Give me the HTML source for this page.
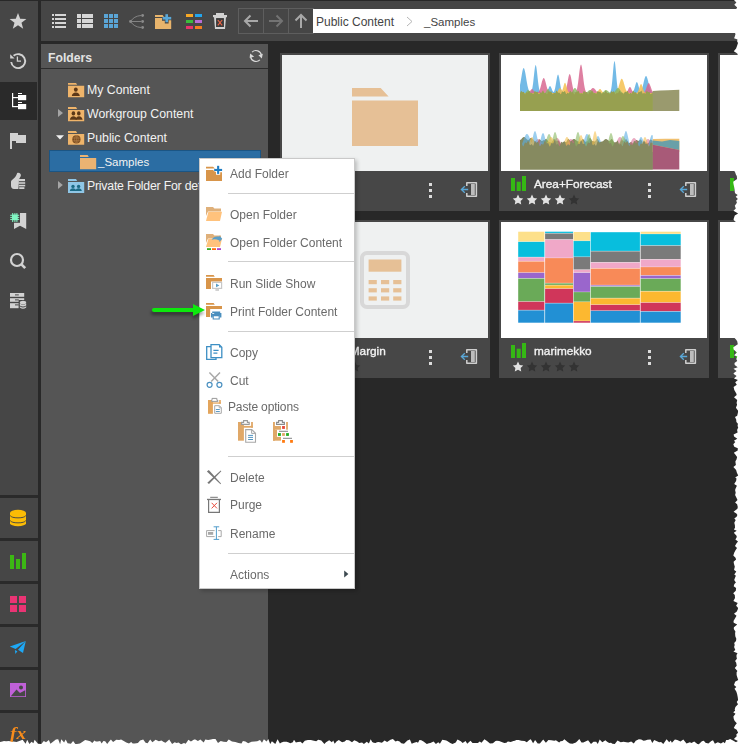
<!DOCTYPE html>
<html><head><meta charset="utf-8">
<style>
*{margin:0;padding:0;box-sizing:border-box}
html,body{width:740px;height:745px;overflow:hidden;background:#fff;font-family:"Liberation Sans",sans-serif}
.a{position:absolute}
svg{position:absolute;overflow:visible}
#app{position:absolute;left:0;top:0;width:740px;height:745px;background:#282828;overflow:hidden}
.sbsep{position:absolute;left:0;width:38px;height:3px;background:#2a2a2a}
.tree{position:absolute;font-size:12.3px;color:#f2f2f2;white-space:nowrap;line-height:14px}
.mi{position:absolute;left:230px;font-size:12px;color:#6a6a6a;will-change:transform;white-space:nowrap;line-height:14px}
.msep{position:absolute;left:228px;width:126px;height:1px;background:#cfcfcf}
.card{position:absolute;width:210px;height:158px;background:#474747}
.card .img{position:absolute;left:2px;top:2px;width:206px;height:116px;background:#fff}
.card .ttl{will-change:transform;position:absolute;left:35px;top:123.5px;font-size:11.8px;color:#f2f2f2;-webkit-text-stroke:0.35px #f2f2f2;white-space:nowrap;line-height:14px}
</style></head><body>
<div id="app">
  <!-- left sidebar -->
  <div class="a" style="left:0;top:1px;width:38px;height:744px;background:#464646"></div>
  <div class="a" style="left:0;top:82px;width:37px;height:38px;background:#2a2a2a"></div>
  <div class="sbsep" style="top:495px"></div>
  <div class="sbsep" style="top:538px"></div>
  <div class="sbsep" style="top:581px"></div>
  <div class="sbsep" style="top:624px"></div>
  <div class="sbsep" style="top:667px"></div>
  <div class="sbsep" style="top:710px"></div>

  <!-- toolbar -->
  <div class="a" style="left:41px;top:1px;width:699px;height:40px;background:#464646"></div>

  <!-- folders panel -->
  <div class="a" style="left:41px;top:44px;width:227px;height:701px;background:#555"></div>
  <div class="a" style="left:41px;top:68px;width:227px;height:1px;background:#2c2c2c"></div>
  <div class="a" style="left:48px;top:50px;font-size:12.2px;font-weight:bold;color:#e2e2e2;line-height:16px">Folders</div>

  <!-- tree -->
  <div class="a" style="left:49px;top:150px;width:212px;height:22px;background:#2b6da3;border:1px solid #1b5584"></div>
  <div class="tree" style="left:87px;top:83px">My Content</div>
  <div class="tree" style="left:87px;top:107px">Workgroup Content</div>
  <div class="tree" style="left:87px;top:131px">Public Content</div>
  <div class="tree" style="left:98px;top:155px;font-size:11.5px">_Samples</div>
  <div class="tree" style="left:87px;top:179px;letter-spacing:-0.22px">Private Folder For default</div>

  <!-- address bar -->
  <div class="a" style="left:238px;top:8px;width:76px;height:26px;border:1px solid #5e5e5e"></div>
  <div class="a" style="left:263px;top:8px;width:1px;height:26px;background:#5e5e5e"></div>
  <div class="a" style="left:288px;top:8px;width:1px;height:26px;background:#5e5e5e"></div>
  <div class="a" style="left:313px;top:9px;width:427px;height:24px;background:#fff"></div>
  <div class="a" style="left:316px;top:15px;font-size:12px;color:#444;line-height:14px;white-space:nowrap">Public Content</div>
  <div class="a" style="left:424px;top:15px;font-size:11.5px;color:#444;line-height:14px;white-space:nowrap">_Samples</div>

  <!-- cards -->
  <div class="card" style="left:280px;top:53px"><div class="img" style="background:#eff1f1"></div></div>
  <div class="card" style="left:499px;top:53px"><div class="img"></div><div class="ttl">Area+Forecast</div></div>
  <div class="card" style="left:718px;top:53px"><div class="img"></div></div>
  <div class="card" style="left:280px;top:220px"><div class="img" style="background:#eff1f1"></div><div class="ttl">Gross Margin</div></div>
  <div class="card" style="left:499px;top:220px"><div class="img"></div><div class="ttl">marimekko</div></div>
  <div class="card" style="left:718px;top:220px"><div class="img"></div></div>

  <svg style="left:0;top:0" width="740" height="745" viewBox="0 0 740 745">
 <!-- sidebar top icons -->
 <polygon fill="#d2d2d2" points="18.00,12.90 20.20,18.70 26.40,18.90 21.50,22.70 23.20,28.80 18.00,25.30 12.80,28.80 14.50,22.70 9.60,18.90 15.80,18.70"/>
 <!-- history -->
 <path d="M11.2,62 A7,7 0 1 0 13.6,55.8" fill="none" stroke="#d2d2d2" stroke-width="1.9"/>
 <polygon fill="#d2d2d2" points="10.2,54.2 10.2,58.6 14.6,58.6"/>
 <path d="M17.4,56.6 V61.2 H21" fill="none" stroke="#d2d2d2" stroke-width="1.3"/>
 <!-- tree (active) -->
 <g fill="#fff">
  <rect x="12" y="93" width="1.2" height="14"/>
  <rect x="13" y="97" width="5" height="1.2"/>
  <rect x="12" y="106" width="6" height="1.2"/>
  <rect x="18" y="95" width="8.2" height="5.2"/>
  <rect x="18" y="93" width="4" height="1"/>
  <rect x="18" y="104" width="8.2" height="5.2"/>
  <rect x="18" y="102" width="4" height="1"/>
 </g>
 <!-- flag -->
 <polygon fill="#d2d2d2" points="10,133 18,133 18,135 26,135 26,143 16,143 16,141 12,141 12,149 10,149"/>
 <!-- thumbs -->
 <g fill="#d2d2d2">
  <path d="M17.8,172.8 C19.8,172.6 21.4,174 20.8,176 L19,179.2 L18.4,189 L14,189 C12,189 11,187.6 11,185.6 L11,181.8 C11,180.8 11.8,180 12.6,179.4 C14.6,178 16.2,176.2 16.8,174 C17,173.2 17.3,172.8 17.8,172.8 Z"/>
  <rect x="19" y="179" width="6" height="2.2"/>
  <rect x="18.4" y="182.2" width="6.8" height="1.6"/>
  <rect x="18.8" y="184.8" width="6.4" height="1.6"/>
  <rect x="19.2" y="187.2" width="5.2" height="1.8"/>
 </g>
 <!-- bookmark + chip -->
 <path fill="#d2d2d2" d="M14,213 H26.2 V229 L20,225.8 L14,229 Z"/>
 <rect x="10.6" y="212.2" width="9.4" height="10.6" fill="#474747"/>
 <g fill="#80f5c2">
  <rect x="12" y="214.6" width="5.6" height="5.6"/>
  <rect x="12.2" y="213" width="1" height="9"/><rect x="14.4" y="213" width="1" height="9"/><rect x="16.4" y="213" width="1" height="9"/>
  <rect x="10.2" y="214.8" width="9" height="1"/><rect x="10.2" y="216.9" width="9" height="1"/><rect x="10.2" y="218.9" width="9" height="1"/>
 </g>
 <!-- search -->
 <circle cx="17" cy="260" r="6" fill="none" stroke="#d2d2d2" stroke-width="2.2"/>
 <path d="M21.2,264.2 L25.2,268.2" stroke="#d2d2d2" stroke-width="2.6"/>
 <!-- db list -->
 <g fill="#d2d2d2">
  <rect x="10" y="293" width="14.2" height="3.8"/>
  <rect x="10" y="298.2" width="14.2" height="3.6"/>
  <rect x="10" y="303.2" width="9" height="5"/>
 </g>
 <g fill="#474747">
  <rect x="15" y="294.4" width="3.8" height="1"/>
  <rect x="15" y="299.4" width="3.8" height="1"/>
  <rect x="15" y="304.4" width="3.8" height="1"/>
  <rect x="18.6" y="300" width="8.4" height="10"/>
 </g>
 <g fill="#d2d2d2">
  <ellipse cx="23" cy="302.6" rx="3.2" ry="1.9"/>
  <path d="M19.8,303.6 Q23,306 26.2,303.6 V305.4 Q23,307.6 19.8,305.4 Z"/>
  <path d="M19.8,306.2 Q23,308.6 26.2,306.2 V307.6 Q23,310 19.8,307.6 Z"/>
 </g>
 <!-- lower sidebar -->
 <path fill="#fbbc05" d="M10,512.8 A8,3 0 0 1 26,512.8 V523.2 A8,3 0 0 1 10,523.2 Z"/>
 <path d="M10.2,515.6 A8,2.9 0 0 0 25.8,515.6 M10.2,520.6 A8,2.9 0 0 0 25.8,520.6" fill="none" stroke="#3a3f4a" stroke-width="0.9"/>
 <g fill="#3cb814">
  <rect x="10" y="555" width="4" height="14"/>
  <rect x="16" y="559" width="4" height="10"/>
  <rect x="22" y="553" width="4" height="16"/>
 </g>
 <g fill="#ea3474">
  <rect x="10" y="596" width="7" height="7"/><rect x="19" y="596" width="7" height="7"/>
  <rect x="10" y="605" width="7" height="7"/><rect x="19" y="605" width="7" height="7"/>
 </g>
 <g fill="#1ea8f5">
  <polygon points="9.8,646.4 25.8,641.1 15.6,649"/>
  <polygon points="25.8,641.1 18,649.8 23,652.9"/>
  <polygon points="14.9,650.1 17.4,651.3 15.4,654"/>
 </g>
 <rect x="10" y="683" width="16" height="14" fill="#c061d8"/>
 <path d="M10.8,696.2 L16.5,689.5 L20,693 L25.2,690.2 V696.2 Z" fill="#474747"/>
 <circle cx="21" cy="687.4" r="2" fill="#474747"/>
 <text x="10" y="738.6" font-family="Liberation Serif" font-style="italic" font-weight="bold" font-size="16" textLength="16" lengthAdjust="spacingAndGlyphs" fill="#f78c1c">fx</text>

 <!-- toolbar -->
 <g fill="#d6d6d6">
  <rect x="52" y="14" width="2" height="2"/><rect x="55" y="14" width="11" height="2"/>
  <rect x="52" y="18" width="2" height="2"/><rect x="55" y="18" width="11" height="2"/>
  <rect x="52" y="22" width="2" height="2"/><rect x="55" y="22" width="11" height="2"/>
  <rect x="52" y="26" width="2" height="2"/><rect x="55" y="26" width="11" height="2"/>
  <rect x="77" y="14" width="4" height="4"/><rect x="82" y="14" width="11" height="4"/>
  <rect x="77" y="19" width="4" height="4"/><rect x="82" y="19" width="11" height="4"/>
  <rect x="77" y="24" width="4" height="4"/><rect x="82" y="24" width="11" height="4"/>
 </g>
 <g fill="#5aa5d6">
  <rect x="104" y="14" width="4" height="4"/><rect x="109" y="14" width="4" height="4"/><rect x="114" y="14" width="4" height="4"/>
  <rect x="104" y="19" width="4" height="4"/><rect x="109" y="19" width="4" height="4"/><rect x="114" y="19" width="4" height="4"/>
  <rect x="104" y="24" width="4" height="4"/><rect x="109" y="24" width="4" height="4"/><rect x="114" y="24" width="4" height="4"/>
 </g>
 <g fill="#8a8a8a" stroke="#8a8a8a">
  <circle cx="130.5" cy="21.5" r="1.4" stroke="none"/>
  <circle cx="142.6" cy="15.5" r="1.4" stroke="none"/>
  <circle cx="142.6" cy="21.5" r="1.4" stroke="none"/>
  <circle cx="142.6" cy="27.5" r="1.4" stroke="none"/>
  <path d="M130.5,21.5 Q134,16 141,15.5 M130.5,21.5 H141 M130.5,21.5 Q134,27 141,27.5" fill="none" stroke-width="0.9"/>
 </g>
 <path fill="#e8b46c" d="M155,15 H162.6 L164,17 H155 Z M155,18 H162 V20.8 H164.8 V23.4 H168.6 V20.2 H171.2 V29 H155 Z"/>
 <g fill="#5aa8d8">
  <rect x="165.4" y="14.2" width="2.6" height="8"/>
  <rect x="162.6" y="16.9" width="8.6" height="2.6"/>
 </g>
 <g>
  <rect x="186" y="14" width="7" height="3" fill="#f7a825"/><rect x="195" y="14" width="7" height="3" fill="#22a6ee"/>
  <rect x="186" y="20" width="7" height="3" fill="#3cbb3c"/><rect x="195" y="20" width="7" height="3" fill="#b86cd6"/>
  <rect x="186" y="26" width="7" height="3" fill="#e8336c"/><rect x="195" y="26" width="7" height="3" fill="#f57f22"/>
 </g>
 <g fill="#d2d2d2">
  <rect x="216" y="13" width="8" height="2.2"/>
  <rect x="213" y="15" width="14" height="2.2"/>
  <path d="M214,17 H226 L225,29 H215 Z M216.2,18.2 V27 H223.8 V18.2 Z" fill-rule="evenodd"/>
 </g>
 <rect x="216.2" y="18.2" width="7.6" height="8.8" fill="#3c3c3c"/>
 <path d="M217.8,20 L222.2,25.4 M222.2,20 L217.8,25.4" stroke="#f06545" stroke-width="1.1"/>
 <!-- nav arrows -->
 <path d="M245,21 H258 M250.5,15.5 L245,21 L250.5,26.5" fill="none" stroke="#a8a8a8" stroke-width="2"/>
 <path d="M269,21 H282 M276.5,15.5 L282,21 L276.5,26.5" fill="none" stroke="#737373" stroke-width="2"/>
 <path d="M301,15 V28 M295.5,20.5 L301,15 L306.5,20.5" fill="none" stroke="#a8a8a8" stroke-width="2"/>
 <path d="M407,17 L412,21.5 L407,26" fill="none" stroke="#b5b5b5" stroke-width="1"/>
 <!-- refresh -->
 <g fill="none" stroke="#d8d8d8" stroke-width="1.2">
  <path d="M252.1,52.1 A5.5,5.5 0 0 1 261.4,55.4"/>
  <path d="M259.9,59.9 A5.5,5.5 0 0 1 250.6,56.6"/>
 </g>
 <polygon fill="#d8d8d8" points="258.4,55.2 262.8,53.8 261.8,58.6"/>
 <polygon fill="#d8d8d8" points="250.2,53.4 254.2,56.8 249.6,57.8"/>
</svg>
<svg style="left:0;top:0" width="740" height="745" viewBox="0 0 740 745">
 <!-- My Content -->
 <path fill="#efb46a" d="M68,83 H76 L77.2,84.8 H68 Z M68,85.8 H84.2 V97.2 H68 Z"/>
 <g fill="#5c3818">
  <ellipse cx="75.8" cy="89.6" rx="1.9" ry="2.2"/>
  <path d="M71.8,96 C72,93.6 73.6,92.6 75.8,92.4 C78,92.6 79.6,93.6 79.8,96 Z"/>
 </g>
 <!-- Workgroup -->
 <polygon fill="#a5a5a5" points="58,109 63,113 58,117"/>
 <path fill="#efb46a" d="M68,107 H76 L77.2,109 H68 Z M68,110 H84.2 V121.2 H68 Z"/>
 <g fill="#5c3818">
  <ellipse cx="73.4" cy="113.4" rx="1.8" ry="2.1"/>
  <path d="M69.8,119.8 C70,117.6 71.6,116.4 73.4,116.2 C75.2,116.4 76.8,117.6 77,119.8 Z"/>
  <ellipse cx="78.8" cy="113.4" rx="1.8" ry="2.1"/>
  <path d="M75.4,119.8 C75.6,117.6 77.2,116.4 79,116.2 C80.8,116.4 82.4,117.6 82.6,119.8 Z"/>
 </g>
 <!-- Public -->
 <polygon fill="#f0f0f0" points="56,135.2 64,135.2 60,139.6"/>
 <path fill="#efb46a" d="M68,131 H76 L77.2,133 H68 Z M68,134 H84.2 V144.8 H68 Z"/>
 <circle cx="76.4" cy="139.4" r="4.1" fill="#7a4a1e"/>
 <g stroke="#c08a50" stroke-width="0.5" fill="none">
  <ellipse cx="76.4" cy="139.4" rx="1.8" ry="4"/>
  <path d="M72.4,138 H80.4 M72.4,140.8 H80.4 M76.4,135.4 V143.4"/>
 </g>
 <!-- Samples -->
 <path fill="#eab372" d="M80,155 H87.6 L88.8,157 H80 Z M80,158 H96.2 V169.2 H80 Z"/>
 <!-- Private -->
 <polygon fill="#a5a5a5" points="58,181 62.8,185 58,189"/>
 <path fill="#8fc6e6" d="M68,179 H76 L77.2,181 H68 Z M68,182 H84.2 V193 H68 Z"/>
 <g fill="#1b6a85">
  <circle cx="73" cy="186.4" r="1.7"/>
  <path d="M69.8,191 C70,189.2 71.4,188.3 73,188.2 C74.6,188.3 76,189.2 76.2,191 Z"/>
  <circle cx="78.6" cy="186.4" r="1.7"/>
  <path d="M75.4,191 C75.6,189.2 77,188.3 78.6,188.2 C80.2,188.3 81.6,189.2 81.8,191 Z"/>
 </g>
</svg>
<svg style="left:0;top:0" width="740" height="745" viewBox="0 0 740 745">
<path fill="#e6c096" d="M352,88 H380.7 L388.6,96.5 H352 Z M352,100.5 H418 V146 H352 Z"/>
<rect x="362" y="253" width="46" height="54" rx="5" ry="5" fill="none" stroke="#d8d8d8" stroke-width="4"/>
<g fill="#e6c096"><rect x="368.6" y="259.5" width="32.8" height="12.2"/>
<rect x="368.6" y="280" width="8.2" height="4.2"/>
<rect x="368.6" y="288.2" width="8.2" height="4.2"/>
<rect x="368.6" y="296.4" width="8.2" height="4.2"/>
<rect x="381" y="280" width="8.2" height="4.2"/>
<rect x="381" y="288.2" width="8.2" height="4.2"/>
<rect x="381" y="296.4" width="8.2" height="4.2"/>
<rect x="393.2" y="280" width="8.2" height="4.2"/>
<rect x="393.2" y="288.2" width="8.2" height="4.2"/>
<rect x="393.2" y="296.4" width="8.2" height="4.2"/>
</g>
<path d="M520,111 L520.0,85.1 L520.5,82.5 L521.0,79.5 L521.5,76.4 L522.0,73.4 L522.5,70.8 L523.0,69.0 L523.5,68.1 L524.0,68.2 L524.5,69.4 L525.0,71.4 L525.5,74.1 L526.0,77.1 L526.5,80.2 L527.0,83.1 L527.5,85.7 L528.0,87.8 L528.5,89.5 L529.0,90.7 L529.5,91.6 L530.0,92.1 L530.5,92.5 L531.0,92.1 L531.5,91.2 L532.0,89.6 L532.5,87.2 L533.0,83.9 L533.5,79.6 L534.0,74.9 L534.5,70.4 L535.0,66.9 L535.5,65.1 L536.0,65.5 L536.5,67.9 L537.0,71.9 L537.5,76.6 L538.0,81.2 L538.5,85.1 L539.0,88.2 L539.5,90.3 L540.0,91.6 L540.5,92.3 L541.0,92.7 L541.5,92.9 L542.0,93.0 L542.6,93.0 L543.1,93.0 L543.6,93.0 L544.1,93.0 L544.6,93.0 L545.1,92.9 L545.6,92.8 L546.1,92.6 L546.6,92.3 L547.1,91.6 L547.6,90.7 L548.1,89.6 L548.6,88.3 L549.1,87.1 L549.6,86.2 L550.1,86.0 L550.6,86.4 L551.1,87.4 L551.6,88.6 L552.1,89.9 L552.6,91.0 L553.1,91.8 L553.6,92.1 L554.1,91.4 L554.6,90.1 L555.1,88.2 L555.6,85.6 L556.1,82.6 L556.6,79.5 L557.1,76.8 L557.6,75.0 L558.1,74.5 L558.6,75.5 L559.1,77.6 L559.6,80.6 L560.1,83.7 L560.6,86.6 L561.1,88.9 L561.6,90.6 L562.1,91.7 L562.6,92.3 L563.1,92.7 L563.6,92.9 L564.1,93.0 L564.6,93.0 L565.1,93.0 L565.6,93.0 L566.1,93.0 L566.6,93.0 L567.1,93.0 L567.6,93.0 L568.1,93.0 L568.6,93.0 L569.1,93.0 L569.6,93.0 L570.1,93.0 L570.6,93.0 L571.1,93.0 L571.6,93.0 L572.1,93.0 L572.6,93.0 L573.1,93.0 L573.6,93.0 L574.1,93.0 L574.6,93.0 L575.1,93.0 L575.6,93.0 L576.1,93.0 L576.6,93.0 L577.1,93.0 L577.6,93.0 L578.1,93.0 L578.6,93.0 L579.1,93.0 L579.6,93.0 L580.1,93.0 L580.6,93.0 L581.1,93.0 L581.6,93.0 L582.1,93.0 L582.6,93.0 L583.1,93.0 L583.6,93.0 L584.1,93.0 L584.6,93.0 L585.1,93.0 L585.6,93.0 L586.1,93.0 L586.7,93.0 L587.2,93.0 L587.7,93.0 L588.2,93.0 L588.7,93.0 L589.2,93.0 L589.7,93.0 L590.2,93.0 L590.7,93.0 L591.2,93.0 L591.7,93.0 L592.2,93.0 L592.7,93.0 L593.2,93.0 L593.7,93.0 L594.2,93.0 L594.7,93.0 L595.2,93.0 L595.7,93.0 L596.2,93.0 L596.7,93.0 L597.2,93.0 L597.7,93.0 L598.2,93.0 L598.7,93.0 L599.2,93.0 L599.7,93.0 L600.2,93.0 L600.7,93.0 L601.2,93.0 L601.7,93.0 L602.2,93.0 L602.7,93.0 L603.2,93.0 L603.7,93.0 L604.2,93.0 L604.7,93.0 L605.2,93.0 L605.7,93.0 L606.2,93.0 L606.7,93.0 L607.2,93.0 L607.7,93.0 L608.2,93.0 L608.7,93.0 L609.2,92.8 L609.7,92.6 L610.2,92.0 L610.7,90.9 L611.2,88.9 L611.7,85.7 L612.2,81.2 L612.7,75.6 L613.2,69.7 L613.7,64.6 L614.2,61.5 L614.7,61.3 L615.2,64.0 L615.7,68.9 L616.2,74.7 L616.7,80.5 L617.2,85.2 L617.7,88.6 L618.2,90.7 L618.7,91.9 L619.2,92.5 L619.7,92.8 L620.2,93.0 L620.7,93.0 L621.2,93.0 L621.7,93.0 L622.2,93.0 L622.7,93.0 L623.2,93.0 L623.7,93.0 L624.2,93.0 L624.7,93.0 L625.2,93.0 L625.7,93.0 L626.2,93.0 L626.7,93.0 L627.2,93.0 L627.7,93.0 L628.2,93.0 L628.7,93.0 L629.2,93.0 L629.7,93.0 L630.2,93.0 L630.8,93.0 L631.3,92.9 L631.8,92.8 L632.3,92.6 L632.8,92.2 L633.3,91.5 L633.8,90.4 L634.3,89.0 L634.8,87.3 L635.3,85.4 L635.8,83.7 L636.3,82.5 L636.8,82.0 L637.3,82.4 L637.8,83.5 L638.3,85.2 L638.8,87.0 L639.3,88.8 L639.8,90.3 L640.3,91.3 L640.8,91.3 L641.3,90.4 L641.8,89.2 L642.3,87.7 L642.8,85.9 L643.3,83.9 L643.8,81.8 L644.3,79.8 L644.8,78.0 L645.3,76.7 L645.8,76.1 L646.3,76.1 L646.8,76.9 L647.3,78.2 L647.8,80.0 L648.3,82.1 L648.8,84.2 L649.3,86.2 L649.8,88.0 L650.3,89.4 L650.8,90.6 L651.3,91.4 L651.8,92.0 L652.3,92.4 L652.8,92.7 L652.8,111 Z" fill="#5aaee2" fill-opacity="0.85"/>
<path d="M520,111 L520.0,93.0 L520.5,93.0 L521.0,93.0 L521.5,93.0 L522.0,93.0 L522.5,93.0 L523.0,93.0 L523.5,93.0 L524.0,93.0 L524.5,93.0 L525.0,93.0 L525.5,93.0 L526.0,93.0 L526.5,93.0 L527.0,93.0 L527.5,92.9 L528.0,92.8 L528.5,92.6 L529.0,92.3 L529.5,91.8 L530.0,91.1 L530.5,90.4 L531.0,89.7 L531.5,89.2 L532.0,89.0 L532.5,89.2 L533.0,89.7 L533.5,90.4 L534.0,91.2 L534.5,91.8 L535.0,92.3 L535.5,92.6 L536.0,92.8 L536.5,92.9 L537.0,92.8 L537.5,92.6 L538.0,92.3 L538.5,91.9 L539.0,91.2 L539.5,90.2 L540.0,88.9 L540.5,87.3 L541.0,85.4 L541.5,83.4 L542.0,81.5 L542.6,79.8 L543.1,78.6 L543.6,78.0 L544.1,78.2 L544.6,79.0 L545.1,80.5 L545.6,82.3 L546.1,84.3 L546.6,86.2 L547.1,88.0 L547.6,89.5 L548.1,90.6 L548.6,91.5 L549.1,92.1 L549.6,92.5 L550.1,92.7 L550.6,92.8 L551.1,92.9 L551.6,93.0 L552.1,93.0 L552.6,93.0 L553.1,93.0 L553.6,93.0 L554.1,93.0 L554.6,93.0 L555.1,93.0 L555.6,93.0 L556.1,93.0 L556.6,93.0 L557.1,93.0 L557.6,93.0 L558.1,93.0 L558.6,93.0 L559.1,93.0 L559.6,93.0 L560.1,93.0 L560.6,93.0 L561.1,93.0 L561.6,93.0 L562.1,93.0 L562.6,93.0 L563.1,92.9 L563.6,92.8 L564.1,92.6 L564.6,92.2 L565.1,91.6 L565.6,90.5 L566.1,89.1 L566.6,87.1 L567.1,84.6 L567.6,81.9 L568.1,79.0 L568.6,76.6 L569.1,74.8 L569.6,74.0 L570.1,74.4 L570.6,75.8 L571.1,78.1 L571.6,80.9 L572.1,83.7 L572.6,86.3 L573.1,88.4 L573.6,90.1 L574.1,91.2 L574.6,92.0 L575.1,92.5 L575.6,92.2 L576.1,91.4 L576.6,90.2 L577.1,88.4 L577.6,85.8 L578.1,82.5 L578.6,78.6 L579.1,74.3 L579.6,70.2 L580.1,66.9 L580.6,64.9 L581.1,64.5 L581.6,65.8 L582.1,68.6 L582.6,72.4 L583.1,76.6 L583.6,80.8 L584.1,84.4 L584.6,87.3 L585.1,89.5 L585.6,90.9 L586.1,91.9 L586.7,92.4 L587.2,92.7 L587.7,92.6 L588.2,92.3 L588.7,92.0 L589.2,91.6 L589.7,91.1 L590.2,90.5 L590.7,89.9 L591.2,89.2 L591.7,88.7 L592.2,88.3 L592.7,88.0 L593.2,88.0 L593.7,88.2 L594.2,88.5 L594.7,89.0 L595.2,89.6 L595.7,90.3 L596.2,90.9 L596.7,91.4 L597.2,91.9 L597.7,92.2 L598.2,92.5 L598.7,92.7 L599.2,92.8 L599.7,92.9 L600.2,92.9 L600.7,93.0 L601.2,93.0 L601.7,93.0 L602.2,93.0 L602.7,93.0 L603.2,93.0 L603.7,93.0 L604.2,93.0 L604.7,93.0 L605.2,93.0 L605.7,93.0 L606.2,93.0 L606.7,93.0 L607.2,93.0 L607.7,93.0 L608.2,93.0 L608.7,93.0 L609.2,93.0 L609.7,93.0 L610.2,93.0 L610.7,93.0 L611.2,93.0 L611.7,93.0 L612.2,93.0 L612.7,93.0 L613.2,93.0 L613.7,93.0 L614.2,93.0 L614.7,93.0 L615.2,93.0 L615.7,93.0 L616.2,93.0 L616.7,93.0 L617.2,93.0 L617.7,93.0 L618.2,93.0 L618.7,93.0 L619.2,93.0 L619.7,93.0 L620.2,93.0 L620.7,93.0 L621.2,93.0 L621.7,93.0 L622.2,93.0 L622.7,93.0 L623.2,93.0 L623.7,93.0 L624.2,93.0 L624.7,93.0 L625.2,92.9 L625.7,92.8 L626.2,92.5 L626.7,92.1 L627.2,91.4 L627.7,90.5 L628.2,89.4 L628.7,88.3 L629.2,87.5 L629.7,87.0 L630.2,87.1 L630.8,87.8 L631.3,88.8 L631.8,89.9 L632.3,90.9 L632.8,91.7 L633.3,92.3 L633.8,92.6 L634.3,92.8 L634.8,92.9 L635.3,93.0 L635.8,93.0 L636.3,93.0 L636.8,93.0 L637.3,93.0 L637.8,93.0 L638.3,93.0 L638.8,93.0 L639.3,93.0 L639.8,93.0 L640.3,93.0 L640.8,93.0 L641.3,93.0 L641.8,93.0 L642.3,92.9 L642.8,92.9 L643.3,92.7 L643.8,92.5 L644.3,92.1 L644.8,91.5 L645.3,90.6 L645.8,89.4 L646.3,88.1 L646.8,86.6 L647.3,85.2 L647.8,84.0 L648.3,83.2 L648.8,83.0 L649.3,83.4 L649.8,84.4 L650.3,85.7 L650.8,87.1 L651.3,88.6 L651.8,89.9 L652.3,90.9 L652.8,91.7 L652.8,111 Z" fill="#d86890" fill-opacity="0.85"/>
<path d="M520,111 L520.0,93.0 L520.5,93.0 L521.0,93.0 L521.5,93.0 L522.0,93.0 L522.5,93.0 L523.0,93.0 L523.5,93.0 L524.0,93.0 L524.5,93.0 L525.0,93.0 L525.5,93.0 L526.0,93.0 L526.5,93.0 L527.0,93.0 L527.5,93.0 L528.0,93.0 L528.5,93.0 L529.0,93.0 L529.5,93.0 L530.0,93.0 L530.5,93.0 L531.0,93.0 L531.5,93.0 L532.0,93.0 L532.5,93.0 L533.0,93.0 L533.5,93.0 L534.0,93.0 L534.5,93.0 L535.0,93.0 L535.5,93.0 L536.0,93.0 L536.5,93.0 L537.0,93.0 L537.5,93.0 L538.0,93.0 L538.5,93.0 L539.0,93.0 L539.5,93.0 L540.0,93.0 L540.5,93.0 L541.0,93.0 L541.5,93.0 L542.0,93.0 L542.6,93.0 L543.1,93.0 L543.6,93.0 L544.1,93.0 L544.6,93.0 L545.1,93.0 L545.6,93.0 L546.1,93.0 L546.6,93.0 L547.1,93.0 L547.6,93.0 L548.1,93.0 L548.6,93.0 L549.1,93.0 L549.6,93.0 L550.1,93.0 L550.6,93.0 L551.1,93.0 L551.6,93.0 L552.1,93.0 L552.6,93.0 L553.1,93.0 L553.6,93.0 L554.1,93.0 L554.6,93.0 L555.1,93.0 L555.6,92.9 L556.1,92.7 L556.6,92.5 L557.1,92.0 L557.6,91.4 L558.1,90.5 L558.6,89.6 L559.1,88.7 L559.6,88.2 L560.1,88.0 L560.6,88.3 L561.1,89.0 L561.6,89.9 L562.1,90.8 L562.6,89.6 L563.1,87.9 L563.6,86.0 L564.1,84.3 L564.6,83.1 L565.1,82.8 L565.6,83.5 L566.1,84.9 L566.6,86.8 L567.1,88.6 L567.6,90.2 L568.1,91.4 L568.6,92.1 L569.1,92.6 L569.6,92.8 L570.1,92.9 L570.6,93.0 L571.1,93.0 L571.6,93.0 L572.1,93.0 L572.6,93.0 L573.1,93.0 L573.6,93.0 L574.1,93.0 L574.6,93.0 L575.1,93.0 L575.6,93.0 L576.1,93.0 L576.6,93.0 L577.1,93.0 L577.6,93.0 L578.1,93.0 L578.6,93.0 L579.1,93.0 L579.6,93.0 L580.1,93.0 L580.6,93.0 L581.1,93.0 L581.6,93.0 L582.1,93.0 L582.6,93.0 L583.1,93.0 L583.6,93.0 L584.1,93.0 L584.6,93.0 L585.1,93.0 L585.6,93.0 L586.1,93.0 L586.7,93.0 L587.2,93.0 L587.7,93.0 L588.2,93.0 L588.7,93.0 L589.2,93.0 L589.7,93.0 L590.2,93.0 L590.7,93.0 L591.2,93.0 L591.7,93.0 L592.2,93.0 L592.7,93.0 L593.2,93.0 L593.7,93.0 L594.2,93.0 L594.7,93.0 L595.2,93.0 L595.7,92.9 L596.2,92.8 L596.7,92.5 L597.2,92.1 L597.7,91.6 L598.2,90.9 L598.7,90.1 L599.2,89.5 L599.7,89.1 L600.2,89.0 L600.7,89.3 L601.2,89.9 L601.7,90.7 L602.2,91.4 L602.7,92.0 L603.2,92.4 L603.7,92.7 L604.2,92.9 L604.7,92.9 L605.2,93.0 L605.7,93.0 L606.2,93.0 L606.7,93.0 L607.2,93.0 L607.7,93.0 L608.2,93.0 L608.7,93.0 L609.2,93.0 L609.7,93.0 L610.2,93.0 L610.7,93.0 L611.2,93.0 L611.7,93.0 L612.2,93.0 L612.7,93.0 L613.2,93.0 L613.7,92.9 L614.2,92.9 L614.7,92.8 L615.2,92.6 L615.7,92.4 L616.2,92.0 L616.7,91.4 L617.2,90.6 L617.7,89.5 L618.2,88.2 L618.7,86.6 L619.2,84.8 L619.7,83.1 L620.2,81.4 L620.7,80.0 L621.2,79.1 L621.7,78.7 L622.2,78.9 L622.7,79.7 L623.2,81.0 L623.7,82.6 L624.2,84.3 L624.7,86.1 L625.2,87.7 L625.7,89.2 L626.2,90.3 L626.7,91.2 L627.2,91.8 L627.7,92.3 L628.2,92.6 L628.7,92.8 L629.2,92.9 L629.7,92.9 L630.2,93.0 L630.8,93.0 L631.3,93.0 L631.8,93.0 L632.3,93.0 L632.8,93.0 L633.3,93.0 L633.8,93.0 L634.3,93.0 L634.8,93.0 L635.3,93.0 L635.8,93.0 L636.3,92.9 L636.8,92.7 L637.3,92.4 L637.8,91.8 L638.3,90.8 L638.8,89.5 L639.3,87.9 L639.8,86.2 L640.3,84.9 L640.8,84.1 L641.3,84.1 L641.8,85.0 L642.3,86.4 L642.8,88.1 L643.3,89.6 L643.8,90.9 L644.3,91.8 L644.8,92.4 L645.3,92.7 L645.8,92.9 L646.3,93.0 L646.8,93.0 L647.3,93.0 L647.8,93.0 L648.3,93.0 L648.8,93.0 L649.3,93.0 L649.8,93.0 L650.3,93.0 L650.8,93.0 L651.3,93.0 L651.8,93.0 L652.3,93.0 L652.8,93.0 L652.8,111 Z" fill="#f5c050" fill-opacity="0.85"/>
<path d="M520,111 L520.0,94.0 L520.5,94.0 L521.0,94.0 L521.5,94.0 L522.0,94.0 L522.5,94.0 L523.0,94.0 L523.5,93.9 L524.0,93.8 L524.5,93.6 L525.0,93.3 L525.5,92.8 L526.0,92.1 L526.5,91.4 L527.0,90.7 L527.5,90.2 L528.0,90.0 L528.5,90.2 L529.0,90.7 L529.5,91.4 L530.0,92.2 L530.5,92.8 L531.0,93.3 L531.5,93.6 L532.0,93.8 L532.5,93.9 L533.0,94.0 L533.5,94.0 L534.0,94.0 L534.5,94.0 L535.0,94.0 L535.5,94.0 L536.0,94.0 L536.5,94.0 L537.0,94.0 L537.5,94.0 L538.0,94.0 L538.5,94.0 L539.0,94.0 L539.5,94.0 L540.0,94.0 L540.5,94.0 L541.0,94.0 L541.5,94.0 L542.0,94.0 L542.6,94.0 L543.1,94.0 L543.6,93.9 L544.1,93.7 L544.6,93.5 L545.1,93.0 L545.6,92.4 L546.1,91.6 L546.6,90.6 L547.1,89.8 L547.6,89.2 L548.1,89.0 L548.6,89.3 L549.1,90.0 L549.6,90.9 L550.1,91.8 L550.6,92.6 L551.1,93.2 L551.6,93.6 L552.1,93.8 L552.6,93.9 L553.1,94.0 L553.6,94.0 L554.1,94.0 L554.6,94.0 L555.1,94.0 L555.6,94.0 L556.1,94.0 L556.6,94.0 L557.1,94.0 L557.6,94.0 L558.1,94.0 L558.6,94.0 L559.1,94.0 L559.6,94.0 L560.1,94.0 L560.6,94.0 L561.1,94.0 L561.6,94.0 L562.1,94.0 L562.6,94.0 L563.1,94.0 L563.6,94.0 L564.1,94.0 L564.6,94.0 L565.1,94.0 L565.6,94.0 L566.1,94.0 L566.6,94.0 L567.1,94.0 L567.6,94.0 L568.1,94.0 L568.6,94.0 L569.1,93.9 L569.6,93.8 L570.1,93.7 L570.6,93.4 L571.1,93.0 L571.6,92.5 L572.1,91.8 L572.6,91.0 L573.1,90.1 L573.6,89.2 L574.1,88.5 L574.6,88.1 L575.1,88.0 L575.6,88.3 L576.1,88.9 L576.6,89.7 L577.1,90.5 L577.6,91.4 L578.1,92.2 L578.6,92.8 L579.1,93.3 L579.6,93.6 L580.1,93.8 L580.6,93.9 L581.1,93.9 L581.6,94.0 L582.1,94.0 L582.6,94.0 L583.1,93.9 L583.6,93.9 L584.1,93.8 L584.6,93.6 L585.1,93.5 L585.6,93.2 L586.1,92.9 L586.7,92.5 L587.2,92.0 L587.7,91.5 L588.2,91.0 L588.7,90.6 L589.2,90.2 L589.7,90.0 L590.2,90.0 L590.7,90.1 L591.2,90.4 L591.7,90.8 L592.2,91.3 L592.7,91.8 L593.2,92.3 L593.7,92.7 L594.2,93.1 L594.7,93.4 L595.2,93.6 L595.7,93.7 L596.2,93.8 L596.7,93.9 L597.2,93.9 L597.7,94.0 L598.2,94.0 L598.7,94.0 L599.2,93.9 L599.7,93.9 L600.2,93.8 L600.7,93.6 L601.2,93.4 L601.7,93.2 L602.2,92.8 L602.7,92.4 L603.2,92.0 L603.7,91.5 L604.2,91.0 L604.7,90.5 L605.2,90.2 L605.7,90.0 L606.2,90.0 L606.7,90.2 L607.2,90.5 L607.7,90.9 L608.2,91.3 L608.7,91.8 L609.2,92.3 L609.7,92.7 L610.2,93.1 L610.7,93.4 L611.2,93.6 L611.7,93.7 L612.2,93.6 L612.7,93.4 L613.2,93.1 L613.7,92.7 L614.2,92.2 L614.7,91.6 L615.2,90.9 L615.7,90.1 L616.2,89.4 L616.7,88.8 L617.2,88.3 L617.7,88.0 L618.2,88.0 L618.7,88.3 L619.2,88.7 L619.7,89.3 L620.2,90.1 L620.7,90.8 L621.2,91.5 L621.7,92.2 L622.2,92.7 L622.7,93.1 L623.2,93.4 L623.7,93.6 L624.2,93.8 L624.7,93.9 L625.2,93.9 L625.7,94.0 L626.2,94.0 L626.7,94.0 L627.2,94.0 L627.7,94.0 L628.2,94.0 L628.7,94.0 L629.2,94.0 L629.7,94.0 L630.2,94.0 L630.8,94.0 L631.3,94.0 L631.8,94.0 L632.3,94.0 L632.8,94.0 L633.3,94.0 L633.8,94.0 L634.3,94.0 L634.8,94.0 L635.3,94.0 L635.8,94.0 L636.3,94.0 L636.8,94.0 L637.3,94.0 L637.8,94.0 L638.3,94.0 L638.8,94.0 L639.3,94.0 L639.8,94.0 L640.3,94.0 L640.8,94.0 L641.3,94.0 L641.8,94.0 L642.3,94.0 L642.8,94.0 L643.3,94.0 L643.8,94.0 L644.3,94.0 L644.8,94.0 L645.3,94.0 L645.8,94.0 L646.3,94.0 L646.8,94.0 L647.3,94.0 L647.8,94.0 L648.3,94.0 L648.8,94.0 L649.3,94.0 L649.8,94.0 L650.3,94.0 L650.8,94.0 L651.3,94.0 L651.8,94.0 L652.3,94.0 L652.8,94.0 L652.8,111 Z" fill="#88b860" fill-opacity="0.8"/>
<path d="M520,111 L520.0,93.3 L520.5,91.9 L521.0,90.9 L521.5,90.9 L522.0,91.7 L522.5,92.3 L523.0,92.1 L523.5,91.8 L524.0,92.2 L524.5,93.4 L525.0,94.4 L525.5,94.3 L526.0,93.2 L526.5,92.3 L527.0,92.2 L527.5,92.5 L528.0,92.4 L528.5,91.5 L529.0,90.7 L529.5,90.8 L530.0,92.0 L530.5,93.2 L531.0,93.5 L531.5,93.1 L532.0,92.9 L532.5,93.4 L533.0,94.0 L533.5,93.8 L534.0,92.6 L534.5,91.3 L535.0,90.9 L535.5,91.5 L536.0,92.1 L536.5,92.0 L537.0,91.5 L537.5,91.7 L538.0,92.8 L538.5,94.0 L539.0,94.4 L539.5,93.7 L540.0,92.7 L540.5,92.4 L541.0,92.8 L541.5,92.8 L542.0,91.9 L542.6,90.8 L543.1,90.6 L543.6,91.4 L544.1,92.6 L544.6,93.2 L545.1,92.9 L545.6,92.7 L546.1,93.2 L546.6,94.0 L547.1,94.2 L547.6,93.3 L548.1,91.9 L548.6,91.2 L549.1,91.5 L549.6,92.0 L550.1,92.0 L550.6,91.4 L551.1,91.2 L551.6,92.1 L552.1,93.5 L552.6,94.3 L553.1,93.9 L553.6,93.0 L554.1,92.7 L554.6,93.0 L555.1,93.2 L555.6,92.5 L556.1,91.2 L556.6,90.5 L557.1,91.0 L557.6,92.1 L558.1,92.8 L558.6,92.7 L559.1,92.4 L559.6,92.8 L560.1,93.8 L560.6,94.4 L561.1,93.9 L561.6,92.6 L562.1,91.6 L562.6,91.6 L563.1,92.1 L563.6,92.1 L564.1,91.4 L564.6,90.9 L565.1,91.5 L565.6,92.8 L566.1,93.9 L566.6,93.9 L567.1,93.3 L567.6,92.8 L568.1,93.1 L568.6,93.5 L569.1,93.1 L569.6,91.8 L570.1,90.7 L570.6,90.7 L571.1,91.7 L571.6,92.5 L572.1,92.5 L572.6,92.1 L573.1,92.4 L573.6,93.4 L574.1,94.4 L574.6,94.3 L575.1,93.2 L575.6,92.1 L576.1,91.8 L576.6,92.2 L577.1,92.3 L577.6,91.6 L578.1,90.8 L578.6,91.0 L579.1,92.1 L579.6,93.4 L580.1,93.8 L580.6,93.3 L581.1,92.9 L581.6,93.2 L582.1,93.7 L582.6,93.6 L583.1,92.5 L583.6,91.2 L584.1,90.7 L584.6,91.4 L585.1,92.2 L585.6,92.3 L586.1,91.9 L586.7,91.9 L587.2,92.9 L587.7,94.1 L588.2,94.5 L588.7,93.7 L589.2,92.6 L589.7,92.1 L590.2,92.4 L590.7,92.5 L591.2,91.9 L591.7,90.9 L592.2,90.6 L592.7,91.5 L593.2,92.8 L593.7,93.5 L594.2,93.3 L594.7,92.9 L595.2,93.1 L595.7,93.8 L596.2,94.0 L596.7,93.1 L597.2,91.7 L597.7,90.9 L598.2,91.2 L598.7,91.9 L599.2,92.1 L599.7,91.7 L600.2,91.5 L600.7,92.3 L601.2,93.6 L601.7,94.4 L602.2,94.0 L602.7,93.0 L603.2,92.4 L603.7,92.6 L604.2,92.9 L604.7,92.3 L605.2,91.2 L605.7,90.5 L606.2,91.0 L606.7,92.2 L607.2,93.1 L607.7,93.1 L608.2,92.7 L608.7,92.9 L609.2,93.7 L609.7,94.3 L610.2,93.8 L610.7,92.4 L611.2,91.3 L611.7,91.3 L612.2,91.9 L612.7,92.1 L613.2,91.6 L613.7,91.2 L614.2,91.7 L614.7,93.0 L615.2,94.1 L615.7,94.2 L616.2,93.4 L616.7,92.7 L617.2,92.8 L617.7,93.2 L618.2,92.9 L618.7,91.7 L619.2,90.7 L619.7,90.7 L620.2,91.7 L620.7,92.7 L621.2,92.8 L621.7,92.5 L622.2,92.6 L622.7,93.4 L623.2,94.3 L623.7,94.2 L624.2,93.1 L624.7,91.9 L625.2,91.5 L625.7,91.9 L626.2,92.2 L626.7,91.7 L627.2,91.0 L627.7,91.1 L628.2,92.3 L628.7,93.6 L629.2,94.1 L629.7,93.5 L630.2,92.9 L630.8,93.0 L631.3,93.4 L631.8,93.4 L632.3,92.3 L632.8,91.0 L633.3,90.6 L633.8,91.3 L634.3,92.2 L634.8,92.6 L635.3,92.3 L635.8,92.2 L636.3,93.0 L636.8,94.1 L637.3,94.5 L637.8,93.7 L638.3,92.4 L638.8,91.8 L639.3,92.0 L639.8,92.3 L640.3,91.9 L640.8,91.0 L641.3,90.8 L641.8,91.6 L642.3,93.0 L642.8,93.8 L643.3,93.6 L643.8,93.0 L644.3,93.0 L644.8,93.6 L645.3,93.8 L645.8,93.0 L646.3,91.6 L646.8,90.8 L647.3,91.0 L647.8,91.9 L648.3,92.3 L648.8,92.0 L649.3,91.8 L649.8,92.4 L650.3,93.7 L650.8,94.5 L651.3,94.1 L651.8,93.0 L652.3,92.2 L652.8,92.3 L652.8,111 Z" fill="#97a050" fill-opacity="1"/>
<path d="M652.8,91 L660,90.6 L668,90.2 L679.3,89.8 V111 H652.8 Z" fill="#9a9a6e"/>
<path d="M520,169.4 L520.0,140.1 L520.5,139.8 L521.0,139.4 L521.5,138.9 L522.0,138.3 L522.5,137.8 L523.0,137.4 L523.5,137.1 L524.0,137.0 L524.5,137.1 L525.0,137.4 L525.5,137.8 L526.0,138.4 L526.5,138.9 L527.0,139.4 L527.5,139.8 L528.0,140.1 L528.5,140.0 L529.0,139.4 L529.5,138.9 L530.0,138.4 L530.5,138.1 L531.0,138.0 L531.5,138.1 L532.0,138.4 L532.5,138.9 L533.0,139.5 L533.5,140.0 L534.0,140.5 L534.5,141.0 L535.0,141.3 L535.5,141.5 L536.0,141.7 L536.5,141.8 L537.0,141.9 L537.5,141.9 L538.0,141.3 L538.5,140.3 L539.0,139.6 L539.5,139.3 L540.0,139.4 L540.5,139.9 L541.0,140.5 L541.5,140.9 L542.0,141.0 L542.6,140.8 L543.1,140.4 L543.6,140.1 L544.1,140.2 L544.6,140.2 L545.1,139.6 L545.6,139.1 L546.1,139.0 L546.6,139.2 L547.1,139.7 L547.6,140.4 L548.1,141.1 L548.6,141.7 L549.1,141.9 L549.6,142.0 L550.1,142.3 L550.6,142.6 L551.1,142.7 L551.6,142.4 L552.1,141.8 L552.6,140.9 L553.1,139.9 L553.6,139.3 L554.1,139.1 L554.6,139.4 L555.1,139.9 L555.6,140.6 L556.1,141.1 L556.6,141.2 L557.1,141.0 L557.6,140.7 L558.1,140.5 L558.6,140.6 L559.1,141.1 L559.6,141.9 L560.1,142.8 L560.6,143.6 L561.1,144.0 L561.6,143.9 L562.1,143.4 L562.6,142.7 L563.1,142.0 L563.6,141.7 L564.1,141.7 L564.6,142.0 L565.1,142.0 L565.6,142.0 L566.1,142.0 L566.6,141.4 L567.1,140.5 L567.6,139.6 L568.1,139.1 L568.6,139.0 L569.1,139.4 L569.6,140.0 L570.1,140.8 L570.6,141.2 L571.1,140.8 L571.6,140.4 L572.1,140.0 L572.6,139.6 L573.1,139.3 L573.6,139.0 L574.1,139.0 L574.6,139.1 L575.1,139.4 L575.6,139.8 L576.1,140.2 L576.6,140.6 L577.1,141.0 L577.6,141.3 L578.1,141.4 L578.6,141.4 L579.1,141.6 L579.6,141.9 L580.1,141.9 L580.6,141.6 L581.1,141.0 L581.6,140.2 L582.1,139.4 L582.6,138.9 L583.1,139.0 L583.6,139.5 L584.1,140.3 L584.6,141.0 L585.1,141.6 L585.6,141.8 L586.1,141.7 L586.7,141.4 L587.2,141.2 L587.7,141.3 L588.2,140.6 L588.7,139.5 L589.2,138.7 L589.7,138.1 L590.2,138.0 L590.7,138.4 L591.2,139.2 L591.7,140.2 L592.2,141.2 L592.7,141.0 L593.2,141.0 L593.7,141.3 L594.2,141.5 L594.7,141.6 L595.2,141.3 L595.7,140.7 L596.2,139.9 L596.7,139.3 L597.2,138.9 L597.7,139.1 L598.2,139.7 L598.7,140.5 L599.2,141.4 L599.7,142.0 L600.2,142.1 L600.7,142.0 L601.2,141.8 L601.7,141.6 L602.2,141.5 L602.7,141.2 L603.2,140.9 L603.7,140.4 L604.2,140.0 L604.7,139.5 L605.2,139.2 L605.7,139.0 L606.2,139.0 L606.7,139.2 L607.2,139.5 L607.7,139.9 L608.2,140.3 L608.7,140.8 L609.2,141.2 L609.7,141.0 L610.2,140.5 L610.7,139.8 L611.2,139.2 L611.7,139.0 L612.2,139.3 L612.7,140.0 L613.2,140.9 L613.7,141.8 L614.2,142.2 L614.7,142.2 L615.2,142.4 L615.7,142.1 L616.2,141.9 L616.7,141.9 L617.2,142.3 L617.7,142.9 L618.2,143.5 L618.7,143.9 L619.2,143.8 L619.7,143.2 L620.2,142.4 L620.7,141.4 L621.2,140.6 L621.7,140.3 L622.2,140.3 L622.7,140.6 L623.2,140.9 L623.7,141.1 L624.2,140.9 L624.7,140.4 L625.2,139.8 L625.7,139.3 L626.2,139.2 L626.7,139.6 L627.2,140.4 L627.7,141.3 L628.2,142.2 L628.7,142.8 L629.2,143.0 L629.7,142.7 L630.2,142.4 L630.8,142.1 L631.3,142.1 L631.8,142.4 L632.3,142.9 L632.8,143.4 L633.3,143.7 L633.8,143.5 L634.3,142.9 L634.8,141.9 L635.3,141.0 L635.8,140.2 L636.3,139.9 L636.8,140.0 L637.3,140.3 L637.8,140.7 L638.3,140.9 L638.8,140.8 L639.3,140.4 L639.8,139.9 L640.3,139.5 L640.8,139.5 L641.3,140.0 L641.8,140.8 L642.3,141.8 L642.8,142.7 L643.3,143.2 L643.8,143.3 L644.3,143.0 L644.8,142.5 L645.3,142.2 L645.8,142.1 L646.3,142.4 L646.8,142.8 L647.3,143.2 L647.8,143.4 L648.3,143.1 L648.8,142.5 L649.3,141.5 L649.8,140.5 L650.3,139.8 L650.8,139.6 L651.3,139.7 L651.8,140.2 L652.3,140.6 L652.8,140.9 L652.8,169.4 Z" fill="#868a60" fill-opacity="1"/>
<path d="M520,150 L520.0,150.0 L520.5,150.0 L521.0,150.0 L521.5,150.0 L522.0,150.0 L522.5,150.0 L523.0,150.0 L523.5,150.0 L524.0,150.0 L524.5,150.0 L525.0,150.0 L525.5,150.0 L526.0,150.0 L526.5,149.9 L527.0,149.9 L527.5,149.8 L528.0,149.8 L528.5,149.7 L529.0,149.5 L529.5,149.3 L530.0,149.0 L530.5,148.7 L531.0,148.3 L531.5,147.8 L532.0,147.2 L532.5,146.5 L533.0,145.7 L533.5,144.9 L534.0,144.0 L534.5,143.1 L535.0,142.2 L535.5,141.3 L536.0,140.5 L536.5,139.9 L537.0,139.4 L537.5,139.1 L538.0,139.0 L538.5,139.1 L539.0,139.5 L539.5,140.0 L540.0,140.6 L540.5,141.4 L541.0,142.3 L541.5,143.2 L542.0,144.1 L542.6,145.0 L543.1,145.9 L543.6,146.6 L544.1,147.3 L544.6,147.9 L545.1,148.4 L545.6,148.8 L546.1,149.1 L546.6,149.3 L547.1,149.5 L547.6,149.4 L548.1,149.2 L548.6,148.9 L549.1,148.6 L549.6,148.1 L550.1,147.6 L550.6,147.0 L551.1,146.3 L551.6,145.6 L552.1,144.7 L552.6,143.8 L553.1,142.9 L553.6,141.9 L554.1,141.0 L554.6,140.2 L555.1,139.4 L555.6,138.8 L556.1,138.3 L556.6,138.1 L557.1,138.0 L557.6,138.1 L558.1,138.5 L558.6,139.0 L559.1,139.6 L559.6,140.4 L560.1,141.3 L560.6,142.2 L561.1,143.2 L561.6,144.1 L562.1,145.0 L562.6,145.8 L563.1,146.6 L563.6,147.2 L564.1,147.8 L564.6,147.7 L565.1,147.1 L565.6,146.4 L566.1,145.6 L566.6,144.8 L567.1,143.9 L567.6,142.9 L568.1,142.0 L568.6,141.2 L569.1,140.4 L569.6,139.8 L570.1,139.3 L570.6,139.1 L571.1,139.0 L571.6,139.2 L572.1,139.5 L572.6,140.1 L573.1,140.7 L573.6,141.6 L574.1,142.4 L574.6,143.4 L575.1,144.3 L575.6,145.2 L576.1,146.0 L576.6,146.7 L577.1,147.4 L577.6,148.0 L578.1,148.4 L578.6,148.8 L579.1,149.1 L579.6,149.4 L580.1,149.6 L580.6,149.7 L581.1,149.8 L581.6,149.9 L582.1,149.9 L582.6,149.9 L583.1,150.0 L583.6,150.0 L584.1,150.0 L584.6,150.0 L585.1,150.0 L585.6,150.0 L586.1,150.0 L586.7,150.0 L587.2,150.0 L587.7,150.0 L588.2,150.0 L588.7,150.0 L589.2,150.0 L589.7,150.0 L590.2,150.0 L590.7,150.0 L591.2,150.0 L591.7,150.0 L592.2,150.0 L592.7,150.0 L593.2,150.0 L593.7,150.0 L594.2,150.0 L594.7,150.0 L595.2,150.0 L595.7,150.0 L596.2,150.0 L596.7,150.0 L597.2,150.0 L597.7,150.0 L598.2,150.0 L598.7,150.0 L599.2,150.0 L599.7,150.0 L600.2,150.0 L600.7,150.0 L601.2,150.0 L601.7,150.0 L602.2,150.0 L602.7,150.0 L603.2,150.0 L603.7,150.0 L604.2,150.0 L604.7,150.0 L605.2,150.0 L605.7,150.0 L606.2,150.0 L606.7,150.0 L607.2,150.0 L607.7,150.0 L608.2,149.9 L608.7,149.9 L609.2,149.9 L609.7,149.8 L610.2,149.7 L610.7,149.5 L611.2,149.3 L611.7,149.1 L612.2,148.7 L612.7,148.3 L613.2,147.8 L613.7,147.2 L614.2,146.4 L614.7,145.6 L615.2,144.6 L615.7,143.6 L616.2,142.5 L616.7,141.4 L617.2,140.3 L617.7,139.4 L618.2,138.5 L618.7,137.8 L619.2,137.3 L619.7,137.0 L620.2,137.0 L620.7,137.3 L621.2,137.7 L621.7,138.4 L622.2,139.3 L622.7,140.2 L623.2,141.3 L623.7,142.4 L624.2,143.5 L624.7,144.5 L625.2,145.5 L625.7,146.3 L626.2,147.1 L626.7,147.7 L627.2,147.9 L627.7,147.3 L628.2,146.6 L628.7,145.8 L629.2,145.0 L629.7,144.0 L630.2,143.0 L630.8,142.0 L631.3,141.0 L631.8,140.1 L632.3,139.3 L632.8,138.7 L633.3,138.3 L633.8,138.0 L634.3,138.0 L634.8,138.3 L635.3,138.7 L635.8,139.3 L636.3,140.1 L636.8,141.1 L637.3,142.0 L637.8,143.0 L638.3,144.0 L638.8,145.0 L639.3,145.9 L639.8,146.7 L640.3,147.4 L640.8,147.9 L641.3,148.1 L641.8,147.5 L642.3,146.9 L642.8,146.1 L643.3,145.3 L643.8,144.5 L644.3,143.5 L644.8,142.6 L645.3,141.7 L645.8,140.9 L646.3,140.2 L646.8,139.6 L647.3,139.2 L647.8,139.0 L648.3,139.0 L648.8,139.3 L649.3,139.7 L649.8,140.3 L650.3,141.0 L650.8,141.9 L651.3,142.8 L651.8,143.7 L652.3,144.6 L652.8,145.5 L652.8,150 Z" fill="#d86890" fill-opacity="0.55"/>
<path d="M520,150 L520.0,147.6 L520.5,146.8 L521.0,146.0 L521.5,145.0 L522.0,143.9 L522.5,142.6 L523.0,141.3 L523.5,140.0 L524.0,138.7 L524.5,137.4 L525.0,136.3 L525.5,135.3 L526.0,134.6 L526.5,134.1 L527.0,134.0 L527.5,134.2 L528.0,134.6 L528.5,135.4 L529.0,136.3 L529.5,137.5 L530.0,138.7 L530.5,140.1 L531.0,141.4 L531.5,142.7 L532.0,141.2 L532.5,138.8 L533.0,136.4 L533.5,134.2 L534.0,132.5 L534.5,131.4 L535.0,131.0 L535.5,131.5 L536.0,132.7 L536.5,134.5 L537.0,136.7 L537.5,139.1 L538.0,141.5 L538.5,143.6 L539.0,145.4 L539.5,143.9 L540.0,142.0 L540.5,139.9 L541.0,137.8 L541.5,135.8 L542.0,134.3 L542.6,133.3 L543.1,133.0 L543.6,133.4 L544.1,134.6 L544.6,136.2 L545.1,138.2 L545.6,140.3 L546.1,142.4 L546.6,144.3 L547.1,145.9 L547.6,147.2 L548.1,148.1 L548.6,148.8 L549.1,149.3 L549.6,149.6 L550.1,149.8 L550.6,149.9 L551.1,149.9 L551.6,150.0 L552.1,150.0 L552.6,150.0 L553.1,150.0 L553.6,150.0 L554.1,150.0 L554.6,150.0 L555.1,150.0 L555.6,150.0 L556.1,150.0 L556.6,150.0 L557.1,150.0 L557.6,150.0 L558.1,150.0 L558.6,150.0 L559.1,150.0 L559.6,150.0 L560.1,150.0 L560.6,150.0 L561.1,150.0 L561.6,150.0 L562.1,150.0 L562.6,150.0 L563.1,150.0 L563.6,150.0 L564.1,150.0 L564.6,150.0 L565.1,150.0 L565.6,150.0 L566.1,150.0 L566.6,150.0 L567.1,150.0 L567.6,150.0 L568.1,150.0 L568.6,150.0 L569.1,150.0 L569.6,150.0 L570.1,150.0 L570.6,150.0 L571.1,150.0 L571.6,150.0 L572.1,150.0 L572.6,150.0 L573.1,150.0 L573.6,150.0 L574.1,150.0 L574.6,150.0 L575.1,150.0 L575.6,150.0 L576.1,150.0 L576.6,150.0 L577.1,149.9 L577.6,149.9 L578.1,149.8 L578.6,149.7 L579.1,149.5 L579.6,149.2 L580.1,148.8 L580.6,148.3 L581.1,147.6 L581.6,146.7 L582.1,145.7 L582.6,144.4 L583.1,143.0 L583.6,141.4 L584.1,139.8 L584.6,138.2 L585.1,136.8 L585.6,135.5 L586.1,134.6 L586.7,134.1 L587.2,134.0 L587.7,134.4 L588.2,135.1 L588.7,136.3 L589.2,137.6 L589.7,139.2 L590.2,140.8 L590.7,142.4 L591.2,143.9 L591.7,145.2 L592.2,146.3 L592.7,147.3 L593.2,147.4 L593.7,146.3 L594.2,145.1 L594.7,143.7 L595.2,142.1 L595.7,140.5 L596.2,139.0 L596.7,137.7 L597.2,136.7 L597.7,136.1 L598.2,136.0 L598.7,136.5 L599.2,137.3 L599.7,138.6 L600.2,140.0 L600.7,141.6 L601.2,143.2 L601.7,144.7 L602.2,146.0 L602.7,147.1 L603.2,148.0 L603.7,148.6 L604.2,149.1 L604.7,149.4 L605.2,149.7 L605.7,149.8 L606.2,149.9 L606.7,149.9 L607.2,150.0 L607.7,150.0 L608.2,150.0 L608.7,150.0 L609.2,150.0 L609.7,150.0 L610.2,150.0 L610.7,150.0 L611.2,150.0 L611.7,150.0 L612.2,150.0 L612.7,150.0 L613.2,150.0 L613.7,150.0 L614.2,150.0 L614.7,150.0 L615.2,150.0 L615.7,150.0 L616.2,150.0 L616.7,150.0 L617.2,150.0 L617.7,149.9 L618.2,149.9 L618.7,149.8 L619.2,149.6 L619.7,149.4 L620.2,148.9 L620.7,148.3 L621.2,147.3 L621.7,146.1 L622.2,144.4 L622.7,142.5 L623.2,140.2 L623.7,137.8 L624.2,135.5 L624.7,133.5 L625.2,131.9 L625.7,131.1 L626.2,131.1 L626.7,131.9 L627.2,133.4 L627.7,135.4 L628.2,137.7 L628.7,140.1 L629.2,142.4 L629.7,144.4 L630.2,146.0 L630.8,147.3 L631.3,148.3 L631.8,148.9 L632.3,149.4 L632.8,149.6 L633.3,149.8 L633.8,149.7 L634.3,149.5 L634.8,149.2 L635.3,148.8 L635.8,148.2 L636.3,147.4 L636.8,146.4 L637.3,145.2 L637.8,143.8 L638.3,142.4 L638.8,140.9 L639.3,139.5 L639.8,138.3 L640.3,137.5 L640.8,137.0 L641.3,137.1 L641.8,137.5 L642.3,138.4 L642.8,139.6 L643.3,141.0 L643.8,142.5 L644.3,144.0 L644.8,145.3 L645.3,146.5 L645.8,147.5 L646.3,148.2 L646.8,148.6 L647.3,147.8 L647.8,146.8 L648.3,145.4 L648.8,143.8 L649.3,142.0 L649.8,140.2 L650.3,138.3 L650.8,136.8 L651.3,135.6 L651.8,135.1 L652.3,135.1 L652.8,135.8 L652.8,150 Z" fill="#5aaee2" fill-opacity="0.6"/>
<path d="M520,150 L520.0,150.0 L520.5,150.0 L521.0,150.0 L521.5,150.0 L522.0,150.0 L522.5,150.0 L523.0,150.0 L523.5,150.0 L524.0,150.0 L524.5,150.0 L525.0,150.0 L525.5,150.0 L526.0,150.0 L526.5,150.0 L527.0,150.0 L527.5,150.0 L528.0,150.0 L528.5,150.0 L529.0,150.0 L529.5,150.0 L530.0,150.0 L530.5,150.0 L531.0,150.0 L531.5,150.0 L532.0,150.0 L532.5,150.0 L533.0,150.0 L533.5,150.0 L534.0,150.0 L534.5,150.0 L535.0,150.0 L535.5,150.0 L536.0,150.0 L536.5,150.0 L537.0,150.0 L537.5,150.0 L538.0,150.0 L538.5,150.0 L539.0,150.0 L539.5,149.9 L540.0,149.9 L540.5,149.8 L541.0,149.6 L541.5,149.4 L542.0,149.1 L542.6,148.7 L543.1,148.1 L543.6,147.3 L544.1,146.3 L544.6,145.1 L545.1,143.7 L545.6,142.1 L546.1,140.5 L546.6,138.8 L547.1,137.2 L547.6,135.9 L548.1,134.8 L548.6,134.2 L549.1,134.0 L549.6,134.3 L550.1,135.1 L550.6,136.2 L551.1,137.6 L551.6,139.2 L552.1,140.9 L552.6,139.2 L553.1,136.9 L553.6,134.9 L554.1,133.3 L554.6,132.3 L555.1,132.0 L555.6,132.5 L556.1,133.7 L556.6,135.5 L557.1,137.6 L557.6,139.9 L558.1,142.1 L558.6,144.1 L559.1,145.8 L559.6,147.1 L560.1,148.1 L560.6,148.8 L561.1,149.3 L561.6,149.6 L562.1,149.8 L562.6,149.9 L563.1,149.9 L563.6,150.0 L564.1,150.0 L564.6,150.0 L565.1,150.0 L565.6,150.0 L566.1,150.0 L566.6,150.0 L567.1,150.0 L567.6,150.0 L568.1,150.0 L568.6,150.0 L569.1,150.0 L569.6,150.0 L570.1,149.9 L570.6,149.8 L571.1,149.7 L571.6,149.5 L572.1,149.1 L572.6,148.5 L573.1,147.7 L573.6,146.6 L574.1,145.1 L574.6,143.3 L575.1,141.2 L575.6,138.9 L576.1,136.7 L576.6,134.7 L577.1,133.1 L577.6,132.2 L578.1,132.0 L578.6,132.6 L579.1,133.9 L579.6,135.7 L580.1,137.9 L580.6,140.1 L581.1,142.3 L581.6,144.3 L582.1,145.9 L582.6,147.2 L583.1,148.2 L583.6,148.7 L584.1,147.9 L584.6,146.9 L585.1,145.6 L585.6,143.9 L586.1,142.1 L586.7,140.1 L587.2,138.1 L587.7,136.3 L588.2,135.0 L588.7,134.2 L589.2,134.0 L589.7,134.6 L590.2,135.8 L590.7,137.4 L591.2,139.3 L591.7,141.3 L592.2,143.3 L592.7,145.0 L593.2,146.4 L593.7,147.6 L594.2,148.4 L594.7,149.0 L595.2,149.4 L595.7,149.7 L596.2,149.8 L596.7,149.9 L597.2,150.0 L597.7,150.0 L598.2,150.0 L598.7,150.0 L599.2,150.0 L599.7,150.0 L600.2,150.0 L600.7,150.0 L601.2,150.0 L601.7,150.0 L602.2,150.0 L602.7,150.0 L603.2,149.9 L603.7,149.8 L604.2,149.7 L604.7,149.5 L605.2,149.1 L605.7,148.5 L606.2,147.7 L606.7,146.6 L607.2,145.1 L607.7,143.4 L608.2,141.4 L608.7,139.2 L609.2,137.1 L609.7,135.3 L610.2,133.9 L610.7,133.1 L611.2,133.1 L611.7,133.7 L612.2,135.0 L612.7,136.8 L613.2,138.9 L613.7,141.0 L614.2,143.0 L614.7,144.8 L615.2,146.3 L615.7,147.5 L616.2,148.4 L616.7,148.7 L617.2,148.1 L617.7,147.4 L618.2,146.4 L618.7,145.3 L619.2,144.1 L619.7,142.6 L620.2,141.2 L620.7,139.7 L621.2,138.4 L621.7,137.3 L622.2,136.5 L622.7,136.1 L623.2,136.0 L623.7,136.4 L624.2,137.2 L624.7,138.3 L625.2,139.6 L625.7,141.1 L626.2,142.5 L626.7,144.0 L627.2,145.3 L627.7,146.4 L628.2,147.3 L628.7,148.1 L629.2,148.7 L629.7,149.1 L630.2,149.4 L630.8,149.6 L631.3,149.8 L631.8,149.9 L632.3,149.9 L632.8,150.0 L633.3,150.0 L633.8,150.0 L634.3,150.0 L634.8,150.0 L635.3,150.0 L635.8,150.0 L636.3,150.0 L636.8,150.0 L637.3,150.0 L637.8,150.0 L638.3,150.0 L638.8,150.0 L639.3,150.0 L639.8,150.0 L640.3,150.0 L640.8,150.0 L641.3,150.0 L641.8,150.0 L642.3,150.0 L642.8,150.0 L643.3,150.0 L643.8,150.0 L644.3,150.0 L644.8,150.0 L645.3,150.0 L645.8,150.0 L646.3,150.0 L646.8,150.0 L647.3,150.0 L647.8,150.0 L648.3,150.0 L648.8,150.0 L649.3,150.0 L649.8,150.0 L650.3,150.0 L650.8,150.0 L651.3,150.0 L651.8,150.0 L652.3,150.0 L652.8,150.0 L652.8,150 Z" fill="#88b860" fill-opacity="0.6"/>
<path d="M520,150 L520.0,150.0 L520.5,150.0 L521.0,150.0 L521.5,150.0 L522.0,150.0 L522.5,150.0 L523.0,150.0 L523.5,150.0 L524.0,149.9 L524.5,149.9 L525.0,149.8 L525.5,149.7 L526.0,149.4 L526.5,149.0 L527.0,148.5 L527.5,147.7 L528.0,146.7 L528.5,145.4 L529.0,144.0 L529.5,142.4 L530.0,140.7 L530.5,139.2 L531.0,138.0 L531.5,137.3 L532.0,137.0 L532.5,137.3 L533.0,138.1 L533.5,139.4 L534.0,140.9 L534.5,142.5 L535.0,144.1 L535.5,145.6 L536.0,146.8 L536.5,147.8 L537.0,148.6 L537.5,149.1 L538.0,149.4 L538.5,149.7 L539.0,149.8 L539.5,149.9 L540.0,149.9 L540.5,149.8 L541.0,149.7 L541.5,149.6 L542.0,149.4 L542.6,149.2 L543.1,148.9 L543.6,148.5 L544.1,148.0 L544.6,147.4 L545.1,146.7 L545.6,145.8 L546.1,144.9 L546.6,143.9 L547.1,142.8 L547.6,141.7 L548.1,140.7 L548.6,139.7 L549.1,138.7 L549.6,138.0 L550.1,137.4 L550.6,137.1 L551.1,137.0 L551.6,137.2 L552.1,137.6 L552.6,138.2 L553.1,139.0 L553.6,139.9 L554.1,141.0 L554.6,142.1 L555.1,143.1 L555.6,144.2 L556.1,145.2 L556.6,146.1 L557.1,146.9 L557.6,147.5 L558.1,148.1 L558.6,148.6 L559.1,148.9 L559.6,149.2 L560.1,149.3 L560.6,148.9 L561.1,148.4 L561.6,147.8 L562.1,146.9 L562.6,145.9 L563.1,144.8 L563.6,143.5 L564.1,142.2 L564.6,140.8 L565.1,139.5 L565.6,138.4 L566.1,137.6 L566.6,137.1 L567.1,137.0 L567.6,137.3 L568.1,137.9 L568.6,138.9 L569.1,140.1 L569.6,141.4 L570.1,142.7 L570.6,144.1 L571.1,145.3 L571.6,146.4 L572.1,147.3 L572.6,148.0 L573.1,148.6 L573.6,149.1 L574.1,149.4 L574.6,149.6 L575.1,149.2 L575.6,148.8 L576.1,148.1 L576.6,147.1 L577.1,145.9 L577.6,144.4 L578.1,142.6 L578.6,140.8 L579.1,138.9 L579.6,137.2 L580.1,135.9 L580.6,135.2 L581.1,135.0 L581.6,135.5 L582.1,136.6 L582.6,138.1 L583.1,139.9 L583.6,141.8 L584.1,143.6 L584.6,145.3 L585.1,146.6 L585.6,147.7 L586.1,148.5 L586.7,149.1 L587.2,149.4 L587.7,149.7 L588.2,149.8 L588.7,149.7 L589.2,149.5 L589.7,149.1 L590.2,148.4 L590.7,147.5 L591.2,146.1 L591.7,144.2 L592.2,142.0 L592.7,139.4 L593.2,136.7 L593.7,134.3 L594.2,132.4 L594.7,131.2 L595.2,131.1 L595.7,131.9 L596.2,133.6 L596.7,135.9 L597.2,138.5 L597.7,141.2 L598.2,143.5 L598.7,145.5 L599.2,147.1 L599.7,148.2 L600.2,148.9 L600.7,149.4 L601.2,149.7 L601.7,149.8 L602.2,149.9 L602.7,150.0 L603.2,150.0 L603.7,150.0 L604.2,150.0 L604.7,150.0 L605.2,150.0 L605.7,150.0 L606.2,150.0 L606.7,150.0 L607.2,150.0 L607.7,150.0 L608.2,150.0 L608.7,150.0 L609.2,150.0 L609.7,150.0 L610.2,150.0 L610.7,150.0 L611.2,150.0 L611.7,150.0 L612.2,150.0 L612.7,150.0 L613.2,150.0 L613.7,150.0 L614.2,150.0 L614.7,150.0 L615.2,150.0 L615.7,150.0 L616.2,150.0 L616.7,150.0 L617.2,150.0 L617.7,150.0 L618.2,150.0 L618.7,150.0 L619.2,150.0 L619.7,150.0 L620.2,150.0 L620.7,150.0 L621.2,150.0 L621.7,150.0 L622.2,150.0 L622.7,150.0 L623.2,150.0 L623.7,150.0 L624.2,150.0 L624.7,150.0 L625.2,150.0 L625.7,150.0 L626.2,150.0 L626.7,150.0 L627.2,150.0 L627.7,150.0 L628.2,150.0 L628.7,150.0 L629.2,150.0 L629.7,150.0 L630.2,150.0 L630.8,150.0 L631.3,150.0 L631.8,150.0 L632.3,150.0 L632.8,150.0 L633.3,150.0 L633.8,150.0 L634.3,150.0 L634.8,150.0 L635.3,150.0 L635.8,150.0 L636.3,150.0 L636.8,150.0 L637.3,149.9 L637.8,149.9 L638.3,149.7 L638.8,149.5 L639.3,149.2 L639.8,148.8 L640.3,148.1 L640.8,147.2 L641.3,146.1 L641.8,144.7 L642.3,143.2 L642.8,141.5 L643.3,139.9 L643.8,138.6 L644.3,137.6 L644.8,137.1 L645.3,137.1 L645.8,137.7 L646.3,138.7 L646.8,140.1 L647.3,141.7 L647.8,143.4 L648.3,144.9 L648.8,146.2 L649.3,147.4 L649.8,148.2 L650.3,148.8 L650.8,149.3 L651.3,149.6 L651.8,149.8 L652.3,149.9 L652.8,149.9 L652.8,150 Z" fill="#f5c050" fill-opacity="0.6"/>
<path d="M520,169.4 L520.0,144.0 L520.5,144.1 L521.0,143.6 L521.5,143.4 L522.0,144.0 L522.5,145.3 L523.0,146.3 L523.5,146.2 L524.0,145.1 L524.5,143.5 L525.0,142.4 L525.5,142.4 L526.0,142.9 L526.5,143.2 L527.0,142.6 L527.5,141.6 L528.0,140.8 L528.5,141.2 L529.0,142.6 L529.5,144.3 L530.0,145.2 L530.5,145.1 L531.0,144.5 L531.5,144.1 L532.0,144.5 L532.5,145.3 L533.0,145.8 L533.5,145.2 L534.0,143.6 L534.5,142.0 L535.0,141.2 L535.5,141.5 L536.0,142.4 L536.5,142.9 L537.0,142.6 L537.5,142.0 L538.0,141.7 L538.5,142.5 L539.0,144.1 L539.5,145.6 L540.0,146.2 L540.5,145.6 L541.0,144.5 L541.5,143.9 L542.0,144.0 L542.6,144.6 L543.1,144.7 L543.6,143.8 L544.1,142.2 L544.6,140.9 L545.1,140.6 L545.6,141.5 L546.1,142.8 L546.6,143.5 L547.1,143.4 L547.6,143.0 L548.1,143.0 L548.6,143.9 L549.1,145.3 L549.6,146.4 L550.1,146.3 L550.6,145.1 L551.1,143.7 L551.6,142.9 L552.1,143.0 L552.6,143.5 L553.1,143.5 L553.6,142.6 L554.1,141.3 L554.6,140.6 L555.1,141.0 L555.6,142.4 L556.1,144.0 L556.6,144.7 L557.1,144.5 L557.6,144.0 L558.1,143.9 L558.6,144.7 L559.1,145.7 L559.6,146.2 L560.1,145.5 L560.6,143.9 L561.1,142.3 L561.6,141.7 L562.1,142.1 L562.6,142.7 L563.1,142.9 L563.6,142.3 L564.1,141.4 L564.6,141.3 L565.1,142.2 L565.6,143.9 L566.1,145.4 L566.6,145.8 L567.1,145.2 L567.6,144.4 L568.1,144.1 L568.6,144.6 L569.1,145.2 L569.6,145.2 L570.1,144.0 L570.6,142.3 L571.1,141.1 L571.6,140.9 L572.1,141.7 L572.6,142.8 L573.1,143.2 L573.6,142.8 L574.1,142.3 L574.6,142.5 L575.1,143.7 L575.6,145.3 L576.1,146.3 L576.6,146.2 L577.1,145.1 L577.6,143.9 L578.1,143.4 L578.6,143.7 L579.1,144.1 L579.6,143.9 L580.1,142.7 L580.6,141.2 L581.1,140.5 L581.6,141.0 L582.1,142.3 L582.6,143.7 L583.1,144.1 L583.6,143.8 L584.1,143.4 L584.6,143.7 L585.1,144.8 L585.6,146.0 L586.1,146.4 L586.7,145.6 L587.2,144.0 L587.7,142.7 L588.2,142.3 L588.7,142.7 L589.2,143.1 L589.7,142.9 L590.2,142.0 L590.7,141.0 L591.2,140.9 L591.7,142.0 L592.2,143.7 L592.7,145.0 L593.2,145.3 L593.7,144.7 L594.2,144.1 L594.7,144.2 L595.2,145.0 L595.7,145.7 L596.2,145.6 L596.7,144.3 L597.2,142.6 L597.7,141.4 L598.2,141.3 L598.7,142.1 L599.2,142.8 L599.7,142.8 L600.2,142.2 L600.7,141.7 L601.2,142.1 L601.7,143.5 L602.2,145.1 L602.7,146.1 L603.2,145.9 L603.7,144.9 L604.2,144.0 L604.7,143.9 L605.2,144.4 L605.7,144.7 L606.2,144.2 L606.7,142.8 L607.2,141.3 L607.7,140.6 L608.2,141.1 L608.7,142.3 L609.2,143.4 L609.7,143.6 L610.2,143.1 L610.7,142.9 L611.2,143.4 L611.7,144.8 L612.2,146.1 L612.7,146.5 L613.2,145.6 L613.7,144.2 L614.2,143.1 L614.7,142.9 L615.2,143.3 L615.7,143.6 L616.2,143.0 L616.7,141.8 L617.2,140.8 L617.7,140.7 L618.2,141.8 L618.7,143.4 L619.2,144.6 L619.7,144.7 L620.2,144.2 L620.7,143.8 L621.2,144.3 L621.7,145.3 L622.2,146.1 L622.7,145.9 L623.2,144.5 L623.7,142.8 L624.2,141.8 L624.7,141.8 L625.2,142.5 L625.7,142.9 L626.2,142.6 L626.7,141.7 L627.2,141.2 L627.7,141.7 L628.2,143.2 L628.7,144.9 L629.2,145.8 L629.7,145.5 L630.2,144.7 L630.8,144.1 L631.3,144.3 L631.8,145.0 L632.3,145.3 L632.8,144.6 L633.3,143.0 L633.8,141.4 L634.3,140.8 L634.8,141.3 L635.3,142.4 L635.8,143.1 L636.3,143.0 L636.8,142.4 L637.3,142.3 L637.8,143.1 L638.3,144.7 L638.8,146.1 L639.3,146.4 L639.8,145.6 L640.3,144.3 L640.8,143.5 L641.3,143.5 L641.8,144.0 L642.3,144.1 L642.8,143.2 L643.3,141.8 L643.8,140.7 L644.3,140.7 L644.8,141.8 L645.3,143.2 L645.8,144.1 L646.3,144.0 L646.8,143.5 L647.3,143.5 L647.8,144.3 L648.3,145.6 L648.8,146.4 L649.3,146.0 L649.8,144.7 L650.3,143.1 L650.8,142.3 L651.3,142.5 L651.8,143.0 L652.3,143.1 L652.8,142.4 L652.8,169.4 Z" fill="#868a60" fill-opacity="1"/>
<path d="M652.8,139 L665,138.8 L679.3,138.8 V152 L652.8,152 Z" fill="#f0c070"/>
<path d="M652.8,140.5 L662,141.5 L670,140 L679.3,141 V150 L652.8,144.8 Z" fill="#6aa0a8"/>
<path d="M652.8,144.8 L679.3,150 V169.4 H652.8 Z" fill="#a85a78"/>
<rect x="518.2" y="231.7" width="26.3" height="10.1" fill="#fde08a"/>
<rect x="518.2" y="241.8" width="26.3" height="15.4" fill="#08bedd"/>
<rect x="518.2" y="257.2" width="26.3" height="4.1" fill="#f0a8c8"/>
<rect x="518.2" y="261.3" width="26.3" height="11.4" fill="#f88a58"/>
<rect x="518.2" y="272.7" width="26.3" height="5.7" fill="#9a66cc"/>
<rect x="518.2" y="278.4" width="26.3" height="23.2" fill="#6aaa58"/>
<rect x="518.2" y="301.6" width="26.3" height="8.6" fill="#d0365a"/>
<rect x="518.2" y="310.2" width="26.3" height="12.5" fill="#2290d4"/>
<rect x="545" y="231.7" width="28.2" height="1.6" fill="#08bedd"/>
<rect x="545" y="233.3" width="28.2" height="6.3" fill="#7a7a7a"/>
<rect x="545" y="239.6" width="28.2" height="18.4" fill="#f0a8c8"/>
<rect x="545" y="258" width="28.2" height="25.2" fill="#f88a58"/>
<rect x="545" y="283.2" width="28.2" height="2.0" fill="#6aaa58"/>
<rect x="545" y="285.2" width="28.2" height="3.5" fill="#fcb830"/>
<rect x="545" y="288.7" width="28.2" height="14.5" fill="#d0365a"/>
<rect x="545" y="303.2" width="28.2" height="19.5" fill="#2290d4"/>
<rect x="573.4" y="232" width="16.9" height="8.9" fill="#fde08a"/>
<rect x="573.4" y="240.9" width="16.9" height="16.0" fill="#08bedd"/>
<rect x="573.4" y="256.9" width="16.9" height="12.9" fill="#7a7a7a"/>
<rect x="573.4" y="269.8" width="16.9" height="2.9" fill="#f0a8c8"/>
<rect x="573.4" y="272.7" width="16.9" height="19.3" fill="#9a66cc"/>
<rect x="573.4" y="292" width="16.9" height="9.9" fill="#6aaa58"/>
<rect x="573.4" y="301.9" width="16.9" height="19.1" fill="#fcb830"/>
<rect x="573.4" y="321" width="16.9" height="1.7" fill="#d0365a"/>
<rect x="590.6" y="232.2" width="49.3" height="19.0" fill="#08bedd"/>
<rect x="590.6" y="251.2" width="49.3" height="11.2" fill="#7a7a7a"/>
<rect x="590.6" y="262.4" width="49.3" height="6.0" fill="#f0a8c8"/>
<rect x="590.6" y="268.4" width="49.3" height="16.8" fill="#f88a58"/>
<rect x="590.6" y="285.2" width="49.3" height="1.3" fill="#9a66cc"/>
<rect x="590.6" y="286.5" width="49.3" height="11.7" fill="#6aaa58"/>
<rect x="590.6" y="298.2" width="49.3" height="6.6" fill="#fcb830"/>
<rect x="590.6" y="304.8" width="49.3" height="6.0" fill="#d0365a"/>
<rect x="590.6" y="310.8" width="49.3" height="11.9" fill="#2290d4"/>
<rect x="640.4" y="231.7" width="40.3" height="2.3" fill="#fde08a"/>
<rect x="640.4" y="234" width="40.3" height="11.6" fill="#08bedd"/>
<rect x="640.4" y="245.6" width="40.3" height="13.8" fill="#7a7a7a"/>
<rect x="640.4" y="259.4" width="40.3" height="7.6" fill="#f0a8c8"/>
<rect x="640.4" y="267" width="40.3" height="8.4" fill="#f88a58"/>
<rect x="640.4" y="275.4" width="40.3" height="3.3" fill="#9a66cc"/>
<rect x="640.4" y="278.7" width="40.3" height="12.6" fill="#6aaa58"/>
<rect x="640.4" y="291.3" width="40.3" height="11.3" fill="#fcb830"/>
<rect x="640.4" y="302.6" width="40.3" height="8.8" fill="#d0365a"/>
<rect x="640.4" y="311.4" width="40.3" height="11.3" fill="#2290d4"/>
<rect x="518.2" y="241.4" width="26.3" height="0.6" fill="#fff" fill-opacity="0.5"/>
<rect x="518.2" y="256.8" width="26.3" height="0.6" fill="#fff" fill-opacity="0.5"/>
<rect x="518.2" y="260.9" width="26.3" height="0.6" fill="#fff" fill-opacity="0.5"/>
<rect x="518.2" y="272.3" width="26.3" height="0.6" fill="#fff" fill-opacity="0.5"/>
<rect x="518.2" y="278.0" width="26.3" height="0.6" fill="#fff" fill-opacity="0.5"/>
<rect x="518.2" y="301.2" width="26.3" height="0.6" fill="#fff" fill-opacity="0.5"/>
<rect x="518.2" y="309.8" width="26.3" height="0.6" fill="#fff" fill-opacity="0.5"/>
<rect x="545" y="232.9" width="28.2" height="0.6" fill="#fff" fill-opacity="0.5"/>
<rect x="545" y="239.2" width="28.2" height="0.6" fill="#fff" fill-opacity="0.5"/>
<rect x="545" y="257.6" width="28.2" height="0.6" fill="#fff" fill-opacity="0.5"/>
<rect x="545" y="282.8" width="28.2" height="0.6" fill="#fff" fill-opacity="0.5"/>
<rect x="545" y="284.8" width="28.2" height="0.6" fill="#fff" fill-opacity="0.5"/>
<rect x="545" y="288.3" width="28.2" height="0.6" fill="#fff" fill-opacity="0.5"/>
<rect x="545" y="302.8" width="28.2" height="0.6" fill="#fff" fill-opacity="0.5"/>
<rect x="573.4" y="240.5" width="16.9" height="0.6" fill="#fff" fill-opacity="0.5"/>
<rect x="573.4" y="256.5" width="16.9" height="0.6" fill="#fff" fill-opacity="0.5"/>
<rect x="573.4" y="269.4" width="16.9" height="0.6" fill="#fff" fill-opacity="0.5"/>
<rect x="573.4" y="272.3" width="16.9" height="0.6" fill="#fff" fill-opacity="0.5"/>
<rect x="573.4" y="291.6" width="16.9" height="0.6" fill="#fff" fill-opacity="0.5"/>
<rect x="573.4" y="301.5" width="16.9" height="0.6" fill="#fff" fill-opacity="0.5"/>
<rect x="573.4" y="320.6" width="16.9" height="0.6" fill="#fff" fill-opacity="0.5"/>
<rect x="590.6" y="250.8" width="49.3" height="0.6" fill="#fff" fill-opacity="0.5"/>
<rect x="590.6" y="262.0" width="49.3" height="0.6" fill="#fff" fill-opacity="0.5"/>
<rect x="590.6" y="268.0" width="49.3" height="0.6" fill="#fff" fill-opacity="0.5"/>
<rect x="590.6" y="284.8" width="49.3" height="0.6" fill="#fff" fill-opacity="0.5"/>
<rect x="590.6" y="286.1" width="49.3" height="0.6" fill="#fff" fill-opacity="0.5"/>
<rect x="590.6" y="297.8" width="49.3" height="0.6" fill="#fff" fill-opacity="0.5"/>
<rect x="590.6" y="304.4" width="49.3" height="0.6" fill="#fff" fill-opacity="0.5"/>
<rect x="590.6" y="310.4" width="49.3" height="0.6" fill="#fff" fill-opacity="0.5"/>
<rect x="640.4" y="233.6" width="40.3" height="0.6" fill="#fff" fill-opacity="0.5"/>
<rect x="640.4" y="245.2" width="40.3" height="0.6" fill="#fff" fill-opacity="0.5"/>
<rect x="640.4" y="259.0" width="40.3" height="0.6" fill="#fff" fill-opacity="0.5"/>
<rect x="640.4" y="266.6" width="40.3" height="0.6" fill="#fff" fill-opacity="0.5"/>
<rect x="640.4" y="275.0" width="40.3" height="0.6" fill="#fff" fill-opacity="0.5"/>
<rect x="640.4" y="278.3" width="40.3" height="0.6" fill="#fff" fill-opacity="0.5"/>
<rect x="640.4" y="290.9" width="40.3" height="0.6" fill="#fff" fill-opacity="0.5"/>
<rect x="640.4" y="302.2" width="40.3" height="0.6" fill="#fff" fill-opacity="0.5"/>
<rect x="640.4" y="311.0" width="40.3" height="0.6" fill="#fff" fill-opacity="0.5"/>
<g fill="#fff" fill-opacity="0.5"><rect x="544.6" y="231.7" width="0.6" height="91"/><rect x="573.0" y="231.7" width="0.6" height="91"/><rect x="590.2" y="231.7" width="0.6" height="91"/><rect x="640.0" y="231.7" width="0.6" height="91"/></g>
<g fill="#dcdcdc"><rect x="429" y="183" width="3" height="3"/><rect x="429" y="189" width="3" height="3"/><rect x="429" y="195" width="3" height="3"/></g>
<path d="M466.8,186 V182.8 H476.4 V196.2 H466.8 V193" fill="none" stroke="#cfcfcf" stroke-width="1.5" stroke-linejoin="round"/><rect x="471" y="184" width="3.8" height="11" fill="#bdbdbd"/><path d="M461.4,189.5 H468.2 M464.8,186.2 L461.4,189.5 L464.8,192.8" fill="none" stroke="#5aa8d8" stroke-width="1.3"/>
<g fill="#35b814"><rect x="511" y="178" width="4" height="13"/><rect x="516.7" y="181.7" width="4" height="9.3"/><rect x="522" y="176" width="4" height="15"/></g>
<polygon fill="#e2e2e2" points="518.00,194.60 519.62,197.88 523.23,198.40 520.62,200.95 521.23,204.55 518.00,202.85 514.77,204.55 515.38,200.95 512.77,198.40 516.38,197.88"/>
<polygon fill="#e2e2e2" points="532.00,194.60 533.62,197.88 537.23,198.40 534.62,200.95 535.23,204.55 532.00,202.85 528.77,204.55 529.38,200.95 526.77,198.40 530.38,197.88"/>
<polygon fill="#e2e2e2" points="546.00,194.60 547.62,197.88 551.23,198.40 548.62,200.95 549.23,204.55 546.00,202.85 542.77,204.55 543.38,200.95 540.77,198.40 544.38,197.88"/>
<polygon fill="#e2e2e2" points="560.00,194.60 561.62,197.88 565.23,198.40 562.62,200.95 563.23,204.55 560.00,202.85 556.77,204.55 557.38,200.95 554.77,198.40 558.38,197.88"/>
<polygon fill="#333333" points="574.00,194.60 575.62,197.88 579.23,198.40 576.62,200.95 577.23,204.55 574.00,202.85 570.77,204.55 571.38,200.95 568.77,198.40 572.38,197.88"/>
<g fill="#dcdcdc"><rect x="648" y="183" width="3" height="3"/><rect x="648" y="189" width="3" height="3"/><rect x="648" y="195" width="3" height="3"/></g>
<path d="M685.8,186 V182.8 H695.4 V196.2 H685.8 V193" fill="none" stroke="#cfcfcf" stroke-width="1.5" stroke-linejoin="round"/><rect x="690" y="184" width="3.8" height="11" fill="#bdbdbd"/><path d="M680.4,189.5 H687.2 M683.8,186.2 L680.4,189.5 L683.8,192.8" fill="none" stroke="#5aa8d8" stroke-width="1.3"/>
<g fill="#35b814"><rect x="292" y="345" width="4" height="13"/><rect x="297.7" y="348.7" width="4" height="9.3"/><rect x="303" y="343" width="4" height="15"/></g>
<polygon fill="#333333" points="299.00,361.60 300.62,364.88 304.23,365.40 301.62,367.95 302.23,371.55 299.00,369.85 295.77,371.55 296.38,367.95 293.77,365.40 297.38,364.88"/>
<polygon fill="#333333" points="313.00,361.60 314.62,364.88 318.23,365.40 315.62,367.95 316.23,371.55 313.00,369.85 309.77,371.55 310.38,367.95 307.77,365.40 311.38,364.88"/>
<polygon fill="#333333" points="327.00,361.60 328.62,364.88 332.23,365.40 329.62,367.95 330.23,371.55 327.00,369.85 323.77,371.55 324.38,367.95 321.77,365.40 325.38,364.88"/>
<polygon fill="#333333" points="341.00,361.60 342.62,364.88 346.23,365.40 343.62,367.95 344.23,371.55 341.00,369.85 337.77,371.55 338.38,367.95 335.77,365.40 339.38,364.88"/>
<polygon fill="#333333" points="355.00,361.60 356.62,364.88 360.23,365.40 357.62,367.95 358.23,371.55 355.00,369.85 351.77,371.55 352.38,367.95 349.77,365.40 353.38,364.88"/>
<g fill="#dcdcdc"><rect x="429" y="350" width="3" height="3"/><rect x="429" y="356" width="3" height="3"/><rect x="429" y="362" width="3" height="3"/></g>
<path d="M466.8,353 V349.8 H476.4 V363.2 H466.8 V360" fill="none" stroke="#cfcfcf" stroke-width="1.5" stroke-linejoin="round"/><rect x="471" y="351" width="3.8" height="11" fill="#bdbdbd"/><path d="M461.4,356.5 H468.2 M464.8,353.2 L461.4,356.5 L464.8,359.8" fill="none" stroke="#5aa8d8" stroke-width="1.3"/>
<g fill="#35b814"><rect x="511" y="345" width="4" height="13"/><rect x="516.7" y="348.7" width="4" height="9.3"/><rect x="522" y="343" width="4" height="15"/></g>
<polygon fill="#e2e2e2" points="518.00,361.60 519.62,364.88 523.23,365.40 520.62,367.95 521.23,371.55 518.00,369.85 514.77,371.55 515.38,367.95 512.77,365.40 516.38,364.88"/>
<polygon fill="#333333" points="532.00,361.60 533.62,364.88 537.23,365.40 534.62,367.95 535.23,371.55 532.00,369.85 528.77,371.55 529.38,367.95 526.77,365.40 530.38,364.88"/>
<polygon fill="#333333" points="546.00,361.60 547.62,364.88 551.23,365.40 548.62,367.95 549.23,371.55 546.00,369.85 542.77,371.55 543.38,367.95 540.77,365.40 544.38,364.88"/>
<polygon fill="#333333" points="560.00,361.60 561.62,364.88 565.23,365.40 562.62,367.95 563.23,371.55 560.00,369.85 556.77,371.55 557.38,367.95 554.77,365.40 558.38,364.88"/>
<polygon fill="#333333" points="574.00,361.60 575.62,364.88 579.23,365.40 576.62,367.95 577.23,371.55 574.00,369.85 570.77,371.55 571.38,367.95 568.77,365.40 572.38,364.88"/>
<g fill="#dcdcdc"><rect x="648" y="350" width="3" height="3"/><rect x="648" y="356" width="3" height="3"/><rect x="648" y="362" width="3" height="3"/></g>
<path d="M685.8,353 V349.8 H695.4 V363.2 H685.8 V360" fill="none" stroke="#cfcfcf" stroke-width="1.5" stroke-linejoin="round"/><rect x="690" y="351" width="3.8" height="11" fill="#bdbdbd"/><path d="M680.4,356.5 H687.2 M683.8,353.2 L680.4,356.5 L683.8,359.8" fill="none" stroke="#5aa8d8" stroke-width="1.3"/>
<g fill="#35b814"><rect x="730" y="178" width="4" height="13"/><rect x="735.7" y="181.7" width="4" height="9.3"/><rect x="741" y="176" width="4" height="15"/></g>
<g fill="#35b814"><rect x="730" y="345" width="4" height="13"/><rect x="735.7" y="348.7" width="4" height="9.3"/><rect x="741" y="343" width="4" height="15"/></g>
</svg>
  <!-- context menu -->
  <div class="a" style="left:199px;top:158px;width:156px;height:431px;background:#fff;border:1px solid #c9c9c9;box-shadow:2px 2px 4px rgba(0,0,0,0.22)"></div>
  <div class="mi" style="top:167px">Add Folder</div>
  <div class="msep" style="top:193px"></div>
  <div class="mi" style="top:208px">Open Folder</div>
  <div class="mi" style="top:236px">Open Folder Content</div>
  <div class="msep" style="top:261px"></div>
  <div class="mi" style="top:277px">Run Slide Show</div>
  <div class="mi" style="top:305px">Print Folder Content</div>
  <div class="msep" style="top:331px"></div>
  <div class="mi" style="top:346px">Copy</div>
  <div class="mi" style="top:374px">Cut</div>
  <div class="mi" style="left:228px;top:400px;letter-spacing:-0.15px">Paste options</div>
  <div class="msep" style="top:456px"></div>
  <div class="mi" style="top:471px">Delete</div>
  <div class="mi" style="top:498px">Purge</div>
  <div class="mi" style="top:527px">Rename</div>
  <div class="msep" style="top:553px"></div>
  <div class="mi" style="top:568px">Actions</div>
  <svg style="left:0;top:0" width="740" height="745" viewBox="0 0 740 745">
 <!-- Add Folder -->
 <path fill="#d8954a" d="M206,166.8 H213 L215,168.6 H206 Z M206,170 H213 L215,171.8 H216 V174.8 H220.2 V172.2 H222 V181 H206 Z"/>
 <rect x="217.1" y="165.8" width="2.1" height="8.1" fill="#1f7cc2"/>
 <rect x="214.2" y="168.9" width="7.9" height="2.1" fill="#1f7cc2"/>
 <!-- Open Folder -->
 <path fill="#dfb07a" d="M206,207 H213 L214.4,208.4 H221 V211.6 H208 L206,216 Z"/>
 <path fill="#ffc27c" d="M208.4,211.8 H222 L220,221 H206 Z"/>
 <!-- Open Folder Content -->
 <path fill="#dfb07a" d="M206,234 H213 L214.4,235.4 H221 V238.6 H208 L206,243 Z"/>
 <path fill="#ffc27c" d="M208.4,238.8 H222 L220,247 H206 Z"/>
 <path fill="#5a9ec8" d="M211.6,239.8 C213.5,236.6 216.6,236 219.4,236.8 L219.4,235.4 L222.2,238.8 L219.4,242.2 L219.4,240.4 C216.4,239.2 213.8,238.8 211.6,239.8 Z"/>
 <rect x="207" y="248.2" width="4" height="1.8" fill="#33aa22"/>
 <rect x="212" y="248.2" width="4" height="1.8" fill="#ff6a10"/>
 <rect x="217" y="248.2" width="4" height="1.8" fill="#aa44cc"/>
 <!-- Run Slide Show -->
 <path fill="#d8954a" d="M206,275 H213.6 L214.8,276.8 H206 Z M206,278 H222 V281.4 H211 V289 H206 Z"/>
 <rect x="212.6" y="282.4" width="9" height="6" fill="#fff" stroke="#c8c8c8" stroke-width="1.2"/>
 <polygon points="216,283.6 219.4,285.4 216,287.2" fill="#5a9ec8"/>
 <rect x="215.4" y="289.2" width="3.6" height="1.6" fill="#c8c8c8"/>
 <!-- Print Folder Content -->
 <path fill="#d8954a" d="M206,303 H213.6 L214.8,304.8 H206 Z M206,306 H222 V309.6 H210.6 V317 H206 Z"/>
 <rect x="210.2" y="309" width="12" height="11" fill="#fff"/>
 <path fill="#4a8fbe" d="M212.2,311.4 H220.2 V313 H221.4 V317.4 H219.6 V315.4 H212.8 V317.4 H211 V313 H212.2 Z"/>
 <path d="M213.2,315.6 H219.2 V319 H213.2 Z" fill="none" stroke="#4a8fbe" stroke-width="1.1"/>
 <rect x="212.2" y="313.2" width="2" height="0.8" fill="#fff"/>
 <!-- Copy -->
 <g fill="none" stroke="#3d8fc4" stroke-width="1.3">
  <path d="M211,346.6 H206.7 V359.4 H216 V358"/>
  <path d="M211,344.7 H219.2 L221.8,347.3 V357.6 H211 Z"/>
  <path d="M213.4,350.4 H218.6 M213.4,353.2 H217.4"/>
 </g>
 <path d="M219,344.7 L221.8,347.5 L219,347.5 Z" fill="#3d8fc4"/>
 <!-- Cut -->
 <path d="M209.4,372.6 L218.2,381.6 M220,372.6 L211.2,381.6" stroke="#a8a8a8" stroke-width="1.5"/>
 <g fill="none" stroke="#4a90c0" stroke-width="1.2">
  <circle cx="209.6" cy="384.8" r="2.5"/>
  <circle cx="219.4" cy="384.8" r="2.5"/>
 </g>
 <!-- Paste -->
 <g fill="#e3a55c">
  <rect x="208" y="400" width="4.9" height="13.8"/>
  <rect x="219.2" y="400" width="1.6" height="3.7"/>
  <rect x="208" y="402.4" width="12.8" height="1.3"/>
 </g>
 <path d="M212,398.4 H216.9 V400.4 H218 V401.4 H211.6 V400.4 H212 Z" fill="#fff" stroke="#9a9a9a" stroke-width="1"/>
 <path d="M214.7,405.7 H219.4 L221.3,407.6 V413.3 H214.7 Z" fill="#fff" stroke="#a8a8a8" stroke-width="1"/>
 <path d="M219.2,405.8 V407.8 H221.2" fill="none" stroke="#a8a8a8" stroke-width="0.9"/>
 <path d="M215.9,409.5 H219.8 M215.9,411.5 H219.8" stroke="#4a8fbe" stroke-width="0.9"/>
 <!-- Paste sub icons -->
 <g fill="#e0a868">
  <rect x="238" y="422" width="5.9" height="18.7"/>
  <rect x="251.1" y="422" width="1.8" height="5.7"/>
  <rect x="238" y="425.9" width="14.9" height="1.8"/>
 </g>
 <path d="M243.6,420.6 H247.4 V422.4 H249.2 V424.4 H241.6 V422.4 H243.6 Z" fill="#fff" stroke="#9a9a9a" stroke-width="1.1"/>
 <path d="M245.7,429.6 H251.8 L255.5,433.3 V442.2 H245.7 Z" fill="#fff" stroke="#a8a8a8" stroke-width="1.1"/>
 <path d="M251.6,429.8 V433.4 H255.3" fill="none" stroke="#a8a8a8" stroke-width="1"/>
 <path d="M248.1,435.4 H253 M248.1,437.4 H253 M248.1,439.5 H253" stroke="#4a8fbe" stroke-width="0.95"/>
 <g fill="#e0a868">
  <rect x="273" y="422" width="1.9" height="18.7"/>
  <rect x="273" y="426" width="8" height="3.7"/>
  <rect x="273" y="429.7" width="4" height="7.2"/>
  <rect x="273" y="436.9" width="8" height="3.8"/>
  <rect x="286.1" y="422" width="1.8" height="7.7"/>
 </g>
 <path d="M278.6,420.6 H282.4 V422.4 H284.4 V424.4 H276.6 V422.4 H278.6 Z" fill="#fff" stroke="#8a8a8a" stroke-width="1.1"/>
 <rect x="282.1" y="426" width="2.8" height="2.9" fill="#e64a3a"/>
 <path d="M279,431.3 H288 M283,438.3 H292" stroke="#666" stroke-width="0.8"/>
 <rect x="278" y="433.1" width="2.9" height="2.8" fill="#22aa22"/>
 <rect x="282.1" y="433.1" width="2.8" height="2.8" fill="#e0a868"/>
 <rect x="286.1" y="433.1" width="2.8" height="2.8" fill="#22aa22"/>
 <rect x="282.1" y="440" width="2.8" height="2.8" fill="#ff7a10"/>
 <rect x="290.1" y="440" width="2.8" height="2.8" fill="#ff7a10"/>
 <!-- Delete -->
 <polygon fill="#777" points="206.9,471.6 208.8,469.9 221,483.5 220.5,484.3"/>
 <polygon fill="#777" points="220.7,470.6 221.3,471.3 209,484 207.3,482.7"/>
 <!-- Purge -->
 <rect x="210.2" y="496.8" width="7.6" height="1" fill="#777"/>
 <rect x="207" y="498.8" width="14" height="1.3" fill="#777"/>
 <path d="M208.6,500 V512.4 H219.4 V500" fill="none" stroke="#777" stroke-width="1.2"/>
 <path d="M211.6,502.8 L217,508.4 M217,502.8 L211.6,508.4" stroke="#e84c3d" stroke-width="1"/>
 <!-- Rename -->
 <path d="M214.6,530.6 H206.6 V536.6 H214.6 M218.2,530.6 H221.2 V536.6 H218.2" fill="none" stroke="#a8a8a8" stroke-width="1"/>
 <rect x="208" y="532" width="5.2" height="2.8" fill="#a8a8a8"/>
 <path d="M216.4,526.8 V539.4 M213.6,526.8 H219.2 M213.6,539.4 H219.2" stroke="#4a98c8" stroke-width="0.95" fill="none"/>
 <!-- Actions arrow -->
 <polygon points="344.2,570.6 348.4,574 344.2,577.4" fill="#3d4a50"/>
 <!-- green arrow -->
 <g opacity="0.35" filter="url(#blur)">
  <path d="M153,313 H194" stroke="#000" stroke-width="4.4" stroke-linecap="round"/>
  <polygon points="193,307 205,313 193,319" fill="#000"/>
 </g>
 <defs><filter id="blur" x="-20%" y="-100%" width="140%" height="300%"><feGaussianBlur stdDeviation="1.8"/></filter></defs>
 <path d="M154,310 H195" stroke="#0de80d" stroke-width="4.2" stroke-linecap="round"/>
 <polygon points="193,304 205,310 193,316" fill="#0de80d"/>
</svg>

</div>
<svg style="position:absolute;left:0;top:0" width="740" height="745" viewBox="0 0 740 745">
<path fill="#fff" fill-rule="evenodd" d="M-10,-10 H760 V760 H-10 Z M-5.0,-5.0 L737.0,-5.0 L734.0,0.0 L736.4,2.6 L734.3,4.7 L737.2,7.5 L735.7,9.7 L733.2,11.4 L736.1,13.4 L737.2,14.7 L734.4,16.4 L738.2,17.6 L737.6,20.3 L733.4,22.8 L735.7,24.6 L738.0,26.0 L734.0,28.0 L733.8,30.8 L735.5,33.9 L734.9,36.2 L734.1,38.3 L737.5,39.6 L737.1,41.3 L738.0,42.9 L737.0,45.9 L736.1,48.6 L733.8,51.3 L737.3,53.4 L737.8,55.0 L735.2,58.0 L735.5,59.9 L738.2,61.9 L733.3,63.9 L736.8,65.3 L735.7,68.5 L736.0,70.6 L734.3,73.3 L736.0,75.8 L734.1,78.2 L734.9,79.7 L734.9,82.8 L734.7,85.2 L733.5,86.6 L737.1,89.4 L736.6,91.4 L737.7,93.9 L735.2,97.0 L738.0,100.2 L737.6,102.6 L735.1,104.8 L737.6,106.5 L733.5,108.0 L737.1,110.8 L737.4,113.0 L734.5,114.3 L735.3,116.1 L733.5,117.6 L737.7,119.5 L736.9,122.6 L734.5,124.8 L735.8,127.9 L733.3,130.6 L737.4,132.2 L737.6,135.0 L735.3,137.4 L737.4,139.8 L735.9,141.6 L737.0,143.3 L736.6,144.6 L733.3,147.7 L736.4,150.0 L736.1,152.9 L735.2,154.7 L737.7,157.8 L733.7,159.2 L733.3,160.6 L733.9,162.7 L736.5,165.7 L735.9,167.1 L735.7,169.0 L734.0,170.6 L735.1,172.2 L736.0,174.8 L736.8,176.1 L737.1,179.0 L733.2,181.8 L733.5,183.9 L734.1,186.7 L734.5,189.3 L734.8,191.9 L735.1,193.2 L737.7,195.0 L735.7,196.8 L737.9,199.1 L736.2,200.5 L736.9,202.7 L734.8,205.8 L735.8,208.4 L733.5,210.7 L738.1,213.6 L734.8,215.5 L733.7,218.7 L733.6,220.0 L737.0,222.9 L736.3,224.9 L736.4,226.2 L735.8,228.3 L735.2,230.3 L733.4,231.9 L734.4,234.0 L737.3,236.6 L735.5,239.2 L735.1,240.9 L736.4,243.1 L733.6,246.2 L735.7,248.4 L737.7,251.0 L736.3,253.8 L736.5,256.5 L736.7,259.4 L734.4,262.0 L735.1,265.0 L737.3,267.4 L738.1,270.5 L734.8,271.8 L735.2,273.6 L736.0,275.1 L734.7,276.4 L736.9,279.5 L733.7,281.6 L736.7,284.8 L734.9,286.4 L736.6,288.8 L738.0,290.6 L734.5,292.4 L734.0,295.3 L734.2,297.9 L734.6,300.3 L737.9,302.2 L735.4,304.4 L734.6,306.8 L735.1,308.3 L734.1,310.1 L733.4,313.2 L737.9,316.0 L733.3,318.6 L733.4,320.8 L736.7,323.3 L733.2,324.9 L733.7,327.2 L735.5,329.0 L735.1,332.0 L737.2,333.5 L735.8,336.3 L734.1,337.6 L736.0,339.6 L737.2,341.3 L737.8,344.2 L733.3,347.2 L733.6,349.5 L736.9,352.5 L734.1,355.2 L737.3,356.6 L736.3,359.0 L737.2,361.1 L734.5,363.0 L734.7,364.9 L737.7,367.3 L733.5,368.7 L736.6,370.9 L734.5,372.5 L733.4,373.8 L736.6,376.0 L734.0,378.5 L737.9,379.9 L735.2,382.2 L736.8,384.8 L733.6,387.0 L734.3,389.9 L735.0,391.2 L736.3,393.4 L736.7,395.0 L734.0,397.2 L737.2,400.1 L736.6,403.1 L737.1,404.7 L735.9,407.7 L738.1,410.7 L737.9,412.7 L737.2,415.8 L735.0,417.0 L736.2,419.4 L736.4,422.1 L737.9,423.7 L737.6,425.9 L738.2,427.6 L737.1,429.9 L737.6,432.5 L733.6,434.5 L734.1,436.5 L737.3,438.8 L733.9,440.7 L735.3,441.9 L733.3,444.3 L734.3,446.8 L737.8,448.2 L737.7,450.5 L733.8,452.7 L735.3,454.4 L737.1,456.9 L736.5,459.6 L735.4,461.3 L735.6,463.2 L735.9,465.0 L733.4,467.1 L736.1,469.9 L736.9,472.7 L738.2,475.4 L735.2,477.4 L736.5,478.6 L736.1,480.9 L734.2,484.1 L736.9,485.8 L735.6,488.6 L735.1,489.9 L735.7,492.8 L735.1,494.9 L736.2,497.3 L737.5,499.9 L735.1,502.6 L737.1,504.3 L737.8,507.1 L737.4,508.7 L733.6,511.7 L736.4,513.5 L737.4,515.0 L736.6,516.7 L734.3,518.5 L735.7,520.1 L734.3,522.8 L734.9,525.3 L735.0,527.8 L733.9,529.4 L736.7,530.7 L733.8,532.8 L736.5,535.7 L736.8,537.0 L735.4,539.4 L738.0,541.6 L736.4,543.5 L735.0,546.0 L737.0,547.9 L735.5,550.3 L734.3,552.6 L733.3,555.4 L735.5,557.8 L736.1,559.5 L733.6,561.8 L734.0,564.0 L734.8,566.8 L734.3,568.7 L734.1,570.0 L736.3,571.5 L734.3,574.4 L735.9,575.8 L735.2,577.2 L734.2,580.0 L735.9,582.6 L734.4,583.9 L733.7,586.3 L736.1,587.9 L735.8,590.8 L733.2,593.3 L734.8,595.1 L735.0,598.1 L733.4,600.9 L737.7,603.1 L736.1,605.8 L737.8,607.4 L738.0,608.8 L736.8,611.5 L734.0,613.8 L736.5,615.7 L735.1,618.2 L733.5,621.0 L733.7,622.7 L737.2,624.6 L733.9,627.3 L733.8,629.1 L735.4,631.6 L735.1,633.3 L735.3,636.2 L736.3,638.8 L736.0,641.0 L734.2,642.9 L734.7,645.1 L734.1,646.9 L735.3,650.0 L733.4,651.6 L737.5,653.2 L736.5,655.1 L736.5,656.7 L736.9,658.8 L735.1,661.1 L736.2,662.8 L736.7,665.7 L734.8,667.9 L737.4,670.9 L736.6,672.3 L736.6,675.1 L737.6,678.2 L738.2,679.9 L735.1,681.8 L734.0,684.9 L736.3,686.9 L734.5,688.7 L736.3,691.4 L737.1,694.1 L737.7,697.1 L738.1,699.9 L736.7,702.1 L738.0,704.3 L735.4,706.9 L734.7,709.4 L735.1,710.8 L733.2,712.3 L735.5,713.7 L733.4,716.4 L733.8,718.9 L734.7,721.1 L736.8,723.2 L735.2,725.2 L733.8,727.9 L736.7,729.8 L738.1,732.7 L736.3,734.4 L736.7,736.2 L733.9,739.1 L737.9,741.0 L736.0,742.3 L733.0,740.4 L730.1,739.0 L728.1,739.9 L726.2,740.1 L724.9,743.2 L723.3,742.0 L720.9,743.4 L717.8,742.2 L716.3,743.0 L714.9,743.8 L713.0,740.3 L711.3,741.1 L708.4,743.4 L705.5,742.8 L703.8,740.7 L701.9,741.3 L698.8,744.2 L697.4,744.0 L694.2,741.4 L691.5,743.1 L689.9,742.2 L686.5,743.6 L683.3,739.4 L680.5,741.5 L677.3,739.9 L674.9,739.6 L671.9,742.8 L670.7,740.6 L669.2,742.3 L666.6,739.3 L663.3,744.0 L661.1,742.0 L659.1,742.2 L657.0,741.3 L654.2,740.0 L652.3,743.0 L650.6,739.4 L647.4,739.8 L645.3,740.6 L643.5,740.8 L641.2,739.6 L638.8,739.3 L637.4,740.1 L635.7,740.8 L633.8,743.4 L631.2,741.5 L628.3,742.6 L626.4,742.2 L623.6,741.8 L620.7,742.3 L617.5,740.4 L614.8,744.1 L612.4,743.7 L611.0,742.8 L609.2,742.9 L607.1,741.8 L605.4,740.3 L602.3,742.3 L599.7,739.6 L597.8,744.0 L596.2,741.8 L593.5,741.7 L591.0,744.0 L588.1,740.2 L586.0,741.2 L583.3,742.5 L581.5,742.6 L579.3,739.1 L577.5,741.0 L575.9,742.5 L572.5,743.8 L569.9,743.5 L567.6,742.1 L564.4,739.3 L562.5,740.9 L560.5,741.2 L559.2,742.5 L555.9,740.2 L554.3,740.7 L551.3,740.2 L548.4,739.9 L545.9,742.8 L543.2,739.4 L539.9,743.4 L537.7,743.5 L535.1,739.9 L533.1,743.3 L530.8,739.2 L529.3,740.0 L526.8,742.3 L524.6,741.1 L521.3,740.8 L518.6,740.1 L516.3,739.9 L514.8,740.8 L513.4,741.0 L510.7,741.9 L507.8,741.5 L506.4,742.8 L504.3,742.9 L501.0,741.7 L499.2,740.9 L496.9,740.7 L495.5,741.1 L492.9,743.2 L490.0,743.6 L487.0,741.1 L484.4,739.3 L481.5,742.7 L479.7,741.5 L477.9,743.1 L475.7,743.1 L472.5,743.0 L470.5,740.8 L467.2,743.7 L465.6,740.9 L462.6,742.9 L460.8,741.3 L457.5,739.5 L455.7,742.5 L452.5,743.9 L450.3,743.1 L446.9,740.7 L445.2,740.3 L442.3,739.7 L439.9,743.8 L438.3,742.3 L435.9,744.0 L433.6,741.6 L430.4,742.9 L428.9,743.2 L426.8,744.0 L423.5,741.6 L421.3,740.2 L419.5,740.1 L418.0,742.8 L416.7,742.1 L414.1,742.8 L411.7,743.8 L409.9,739.5 L407.4,740.4 L404.0,743.8 L401.3,743.3 L399.6,741.5 L397.5,740.8 L395.5,741.5 L392.9,739.1 L390.5,739.7 L387.1,741.9 L384.6,740.6 L381.9,742.7 L378.7,742.0 L376.9,742.3 L375.6,742.9 L373.7,742.7 L372.2,742.1 L370.7,739.2 L368.9,743.4 L366.8,741.7 L363.9,744.1 L362.1,742.6 L359.2,743.1 L357.2,741.5 L354.3,740.3 L352.0,742.3 L349.0,740.3 L346.3,740.1 L344.7,741.5 L342.1,742.3 L338.8,739.9 L336.5,741.5 L334.7,743.8 L333.2,740.4 L331.9,742.3 L329.2,740.2 L326.0,742.3 L324.4,743.9 L321.3,740.6 L318.2,739.7 L316.2,741.2 L312.9,740.6 L310.9,740.1 L307.9,740.0 L304.8,740.8 L302.4,743.6 L300.6,741.7 L298.0,742.0 L295.9,742.4 L294.0,739.8 L292.8,742.2 L290.3,743.2 L288.8,742.5 L286.6,741.7 L283.6,741.7 L281.4,742.4 L279.9,743.5 L277.6,739.2 L275.3,743.9 L271.9,741.2 L270.2,743.9 L268.3,739.1 L266.6,741.4 L263.9,739.3 L262.0,742.8 L260.0,739.9 L257.2,741.3 L254.5,741.5 L251.5,741.7 L248.2,743.2 L245.4,741.5 L242.9,741.0 L241.5,743.6 L238.5,743.0 L235.4,741.9 L232.0,741.5 L228.7,739.4 L226.6,742.0 L223.6,741.7 L220.7,740.9 L218.0,743.1 L215.5,739.1 L212.9,739.0 L211.0,739.6 L208.1,739.9 L205.3,739.4 L203.7,742.6 L200.4,739.4 L197.9,741.1 L195.3,739.4 L194.1,739.4 L190.9,741.6 L188.4,739.7 L185.7,743.7 L184.0,743.1 L181.0,744.2 L178.5,742.4 L176.6,743.1 L174.7,742.2 L172.1,744.1 L169.2,739.5 L167.6,740.9 L165.5,742.7 L163.7,741.9 L161.5,740.6 L158.9,741.3 L155.6,739.7 L152.4,742.3 L150.2,739.4 L147.6,743.2 L145.6,742.7 L143.2,739.5 L140.1,740.6 L137.9,743.0 L134.7,743.4 L132.7,743.4 L131.2,741.9 L129.0,743.5 L126.3,742.4 L123.3,740.8 L121.1,739.5 L119.1,740.0 L116.3,739.7 L113.1,742.1 L110.9,739.6 L108.7,741.9 L107.2,744.1 L105.2,741.3 L103.4,740.9 L101.6,743.4 L100.2,740.9 L97.7,741.5 L95.8,741.5 L94.5,740.6 L92.3,743.0 L90.2,741.2 L87.5,740.4 L85.1,740.0 L82.6,741.8 L79.9,743.5 L77.0,744.1 L75.3,744.0 L73.1,740.9 L70.9,743.8 L67.6,743.2 L65.7,739.6 L64.1,742.5 L61.3,739.3 L60.1,744.2 L58.2,739.2 L55.9,739.5 L53.0,741.8 L50.4,743.8 L48.9,740.1 L46.0,742.2 L43.8,740.9 L41.3,743.9 L38.0,743.8 L34.6,739.7 L33.4,743.3 L31.6,741.7 L29.4,744.1 L27.2,739.7 L25.6,743.7 L22.6,739.7 L19.3,740.9 L16.5,741.9 L13.4,741.5 L12.1,741.9 L9.0,741.1 L6.0,741.3 L4.0,740.9 L2.3,741.6 L-1.0,742.1 L-3.9,739.9 L-5.0,742.0 Z"/>
</svg>
</body></html>
